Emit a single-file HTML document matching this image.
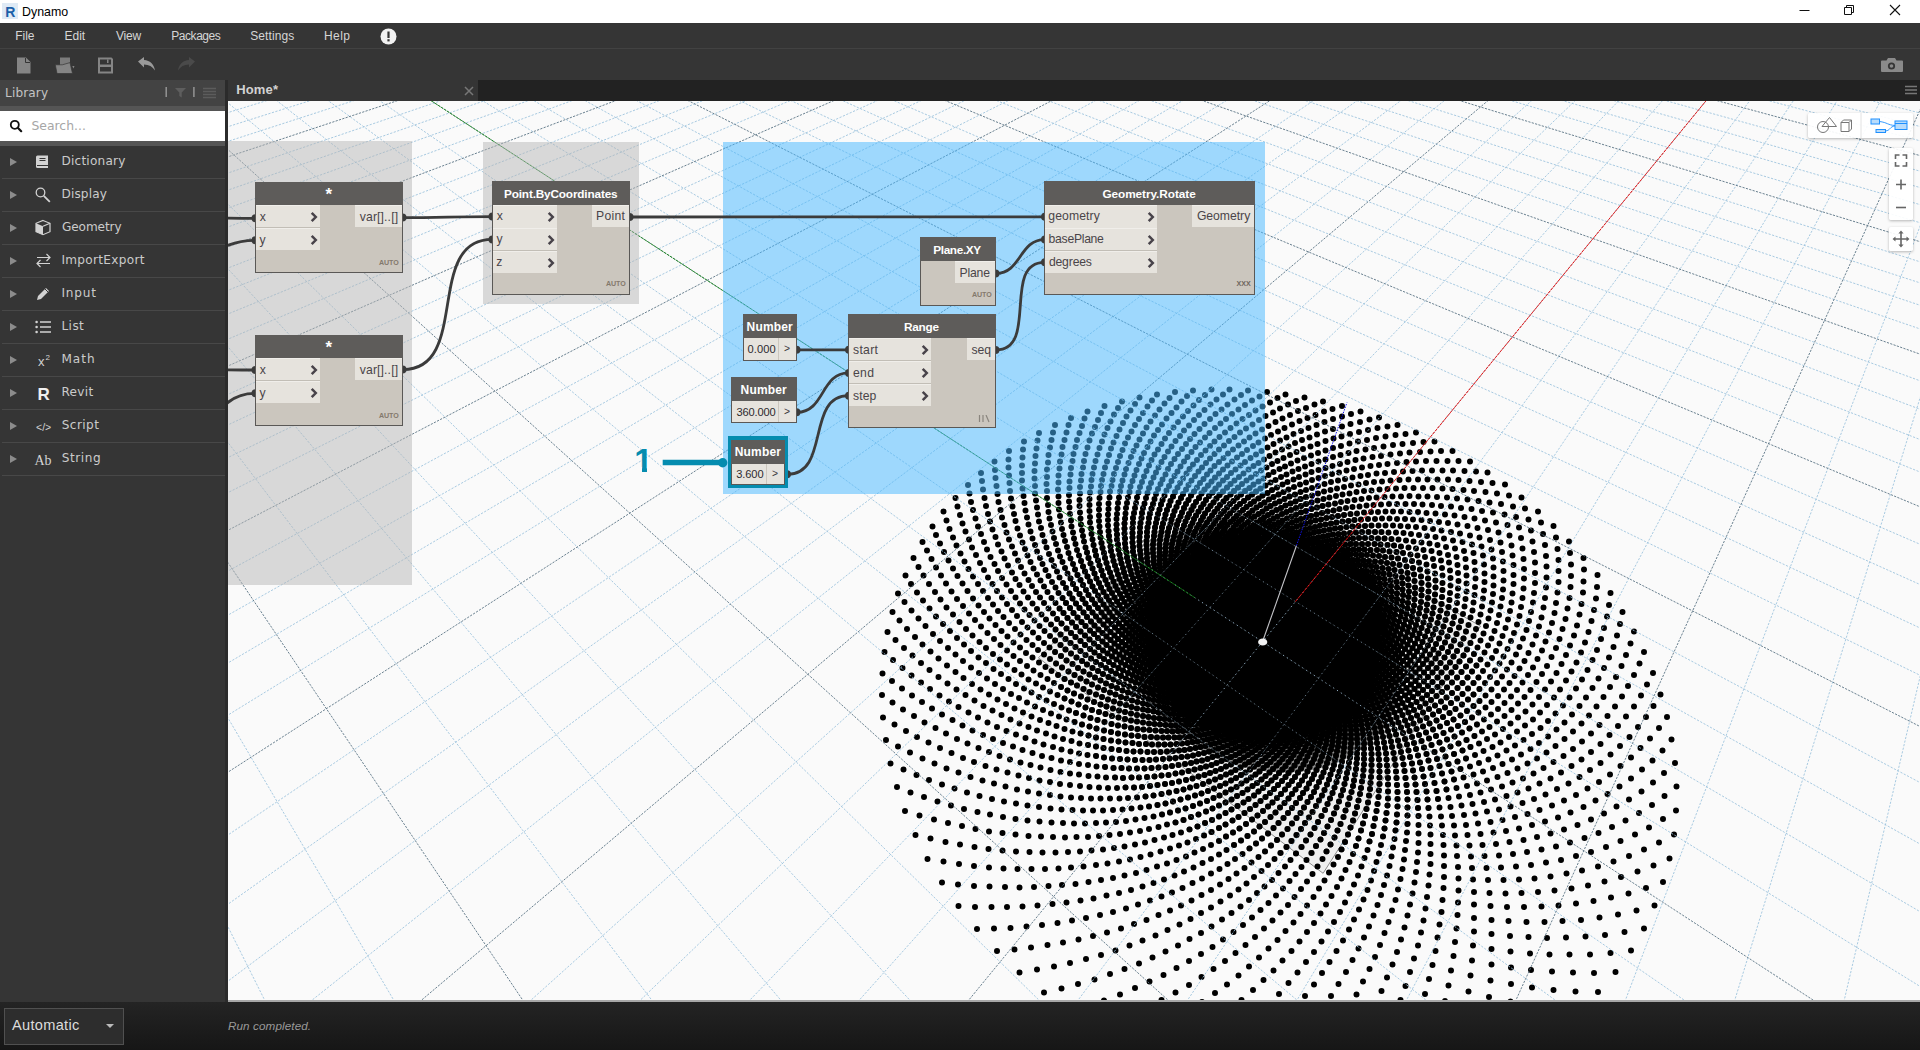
<!DOCTYPE html><html><head><meta charset="utf-8"><title>Dynamo</title><style>
*{box-sizing:border-box;margin:0;padding:0}
html,body{width:1920px;height:1050px;overflow:hidden;background:#353535;font-family:"Liberation Sans",sans-serif;}
.abs{position:absolute}
.tx{position:absolute;line-height:16px;white-space:nowrap}
#title{left:0;top:0;width:1920px;height:23px;background:#fff}
#menu{left:0;top:23px;width:1920px;height:25px;background:#353535}
#tool{left:0;top:48px;width:1920px;height:32px;background:#353535;border-top:1px solid #424242}
#lib{left:0;top:80px;width:225px;height:922px;background:#353535}
#libh{left:0;top:0;width:225px;height:26px;background:#434343}
#libs1{left:0;top:26px;width:225px;height:5px;background:#555}
#search{left:0;top:31px;width:225px;height:30px;background:#fff}
#libs2{left:0;top:61px;width:225px;height:5px;background:#555}
.li{position:absolute;left:2px;width:223px;height:33px;background:#353535;border-bottom:1px solid #484848}
.li .a{position:absolute;left:8px;top:12px;width:0;height:0;border-left:7px solid #8c8c8c;border-top:4px solid transparent;border-bottom:4px solid transparent}
.li svg{position:absolute;left:32px;top:7px}
#vbar{left:225px;top:80px;width:3px;height:922px;background:#2b2b2b}
#tabs{left:228px;top:80px;width:1692px;height:21px;background:#222}
#tab{left:0;top:0;width:250px;height:21px;background:#353535}
#canvas{left:228px;top:101px;width:1692px;height:899px;overflow:hidden;background:#fafafa}
#status{left:0;top:1002px;width:1920px;height:48px;background:linear-gradient(#242424,#161616)}
#sline{left:228px;top:1000px;width:1692px;height:2px;background:#a8a8a8}
#auto{left:4px;top:5.5px;width:120px;height:37px;background:#2d2d2d;border:1px solid #505050}
#auto .a{left:101px;top:15px;width:0;height:0;border-top:4px solid #bbb;border-left:4px solid transparent;border-right:4px solid transparent}
.grp{position:absolute}
.node{position:absolute;background:#cbc6be;border:1px solid #5a5856}
.node .h{position:absolute;left:-1px;top:-1px;right:-1px;background:#5e5c5a}
.port{position:absolute;background:#e6e3dd;height:22px;border-top:1px solid #f0eeea}
.port.i{left:0}
.port.o{right:0}
.port svg{position:absolute;right:2px;top:5px}
.sep{position:absolute;left:0;height:1px;background:#c2beb6}
.num{position:absolute;background:#e6e3dd}
.btn{position:absolute;background:rgba(255,255,255,.92);box-shadow:0 1px 3px rgba(0,0,0,.28);border-radius:2px}
</style></head><body><div id="title" class="abs"><svg class="abs" style="left:2px;top:3px" width="16" height="16" viewBox="0 0 16 16"><rect width="16" height="16" fill="#dfeaf5"/><text x="3.200" y="13.500" font-family="Liberation Sans,sans-serif" font-weight="bold" font-size="14" fill="#1b5fa8">R</text></svg><div class="tx" style="left:22.08px;top:3.8px;font-size:12.4px;color:#000;">Dynamo</div><svg class="abs" style="left:1790px;top:0" width="130" height="23" viewBox="0 0 130 23" fill="none" stroke="#111" stroke-width="1"><path d="M9.5 10.5h10"/><path d="M54.500 7.500h7v7h-7zM56.500 7.500v-2h7v7h-2"/><path d="M100 5l10 10M110 5l-10 10" stroke-width="1.100"/></svg></div><div id="menu" class="abs"><div class="tx" style="left:15.32px;top:4.64px;font-size:12px;color:#d6d6d6;letter-spacing:-0.04px;">File</div><div class="tx" style="left:64.52px;top:4.64px;font-size:12px;color:#d6d6d6;">Edit</div><div class="tx" style="left:116.05px;top:4.64px;font-size:12px;color:#d6d6d6;letter-spacing:-0.23px;">View</div><div class="tx" style="left:171.22px;top:4.64px;font-size:12px;color:#d6d6d6;letter-spacing:-0.44px;">Packages</div><div class="tx" style="left:250.21px;top:4.64px;font-size:12px;color:#d6d6d6;letter-spacing:0.09px;">Settings</div><div class="tx" style="left:324.02px;top:4.64px;font-size:12px;color:#d6d6d6;letter-spacing:0.44px;">Help</div><svg class="abs" style="left:380px;top:4.500px" width="17" height="17" viewBox="0 0 17 17"><circle cx="8.500" cy="8.500" r="8" fill="#f2f2f2"/><rect x="7.400" y="3.500" width="2.200" height="6.500" fill="#353535"/><rect x="7.400" y="11.200" width="2.200" height="2.200" fill="#353535"/></svg></div><div id="tool" class="abs"><svg class="abs" style="left:0;top:0" width="240" height="31" viewBox="0 48.500 240 31"><path d="M17 57h9l4.500 4.500v11.500h-13.500z" fill="#858585"/><path d="M25.500 57.500v4.500h4.500" fill="none" stroke="#353535" stroke-width="1"/><path d="M60 57h10v8h-10z" fill="#7c7c7c"/><path d="M55.300 64.300h7l7.700-2.200 2.500 10.900h-15.500z" fill="#858585" stroke="#353535" stroke-width=".7"/><path d="M72.300 65.500h2.200l-1.100 2.600z" fill="#858585"/><path d="M98 57h13.500l1.500 1.500v14.500h-15z" fill="#858585"/><rect x="100" y="59" width="11" height="5" fill="#353535"/><rect x="100" y="66.500" width="11" height="4.500" fill="#353535"/><rect x="107" y="59" width="1.500" height="3.500" fill="#858585"/><path d="M138 61l6-4.500v3c6 .5 10 4 11 10.500c-2.500-4-6-6-11-6v3z" fill="#9a9a9a"/><path d="M195 61l-6-4.500v3c-6 .5-10 4-11 10.500c2.500-4 6-6 11-6v3z" fill="#4a4a4a"/></svg><svg class="abs" style="left:1880px;top:8px" width="24" height="16" viewBox="0 0 24 16"><path d="M1 3.500h5.500l1.500-2.500h7l1.500 2.500h5.500a1 1 0 0 1 1 1v9.500a1 1 0 0 1-1 1h-20a1 1 0 0 1-1-1v-9.500a1 1 0 0 1 1-1z" fill="#8a8a8a"/><circle cx="11.500" cy="9" r="3.600" fill="#353535"/><circle cx="11.500" cy="9" r="1.800" fill="#8a8a8a"/></svg></div><div id="lib" class="abs"><div id="libh" class="abs"><div class="tx" style="left:5.11px;top:5.01px;font-size:12.1px;color:#c4c4c4;letter-spacing:0.12px;font-family:'DejaVu Sans','Liberation Sans',sans-serif;">Library</div><svg class="abs" style="left:160px;top:4px" width="60" height="18" viewBox="0 0 60 18"><rect x="5.500" y="3" width="1.400" height="10" fill="#9a9a9a"/><path d="M15 4h11l-4.300 4.500v5l-2.400-1.500v-3.500z" fill="#5e5e5e"/><rect x="33.200" y="3" width="1.400" height="10" fill="#9a9a9a"/><path d="M43 4.500h13M43 7.500h13M43 10.500h13M43 13.500h13" stroke="#5c5c5c" stroke-width="1.700"/></svg></div><div id="libs1" class="abs"></div><div id="search" class="abs"><svg class="abs" style="left:9px;top:8px" width="14" height="14" viewBox="0 0 14 14"><circle cx="5.800" cy="5.800" r="4" fill="none" stroke="#111" stroke-width="1.800"/><path d="M8.800 8.800l3.400 3.400" stroke="#111" stroke-width="2.200" stroke-linecap="round"/></svg><div class="tx" style="left:31.48px;top:6.5px;font-size:12.4px;color:#a6a6a6;font-family:'DejaVu Sans','Liberation Sans',sans-serif;">Search...</div></div><div id="libs2" class="abs"></div><div class="li" style="top:66px"><div class="a"></div><svg width="19" height="18" viewBox="0 0 19 18"><path d="M3.500 2.500h10.500v12.500h-10.500a1.500 1.500 0 0 1-1.500-1.500v-9.500a1.500 1.500 0 0 1 1.500-1.500z" fill="#d2d2d2"/><path d="M5.500 5.500h6M5.500 7.500h6" stroke="#353535" stroke-width="1"/><path d="M3 12.500h11" stroke="#353535" stroke-width="1"/></svg><div class="tx" style="left:59.41px;top:6.51px;font-size:12.1px;color:#cbcbcb;letter-spacing:0.22px;font-family:'DejaVu Sans','Liberation Sans',sans-serif;">Dictionary</div></div><div class="li" style="top:99px"><div class="a"></div><svg width="19" height="18" viewBox="0 0 19 18"><circle cx="6.500" cy="6.500" r="4.300" fill="none" stroke="#d2d2d2" stroke-width="1.300"/><path d="M9.800 9.800l6 6" stroke="#d2d2d2" stroke-width="1.800"/></svg><div class="tx" style="left:59.41px;top:6.51px;font-size:12.1px;color:#cbcbcb;letter-spacing:0.16px;font-family:'DejaVu Sans','Liberation Sans',sans-serif;">Display</div></div><div class="li" style="top:132px"><div class="a"></div><svg width="19" height="18" viewBox="0 0 19 18"><path d="M9 1.500l7 2.800v8.400l-7 3-7-3v-8.400z" fill="none" stroke="#d2d2d2" stroke-width="1.200"/><path d="M2 4.300l7 3v8.400l-7-3z" fill="#d2d2d2"/><path d="M9 7.300l7-3" stroke="#d2d2d2" stroke-width="1.200"/></svg><div class="tx" style="left:59.92px;top:6.51px;font-size:12.1px;color:#cbcbcb;letter-spacing:-0.08px;font-family:'DejaVu Sans','Liberation Sans',sans-serif;">Geometry</div></div><div class="li" style="top:165px"><div class="a"></div><svg width="19" height="18" viewBox="0 0 19 18"><path d="M3 6h13M12.500 2.500l3.500 3.500-3.500 3.500M16 12h-13M6.500 8.500l-3.500 3.500 3.500 3.500" fill="none" stroke="#d2d2d2" stroke-width="1.200" transform="translate(0,-0.500)"/></svg><div class="tx" style="left:59.41px;top:6.51px;font-size:12.1px;color:#cbcbcb;letter-spacing:0.3px;font-family:'DejaVu Sans','Liberation Sans',sans-serif;">ImportExport</div></div><div class="li" style="top:198px"><div class="a"></div><svg width="19" height="18" viewBox="0 0 19 18"><path d="M3 15l1-4 8-8 3 3-8 8z" fill="#d2d2d2"/><path d="M11 4l3 3" stroke="#353535" stroke-width="1"/></svg><div class="tx" style="left:59.41px;top:6.51px;font-size:12.1px;color:#cbcbcb;letter-spacing:0.79px;font-family:'DejaVu Sans','Liberation Sans',sans-serif;">Input</div></div><div class="li" style="top:231px"><div class="a"></div><svg width="19" height="18" viewBox="0 0 19 18"><path d="M6 4h11M6 9h11M6 14h11" stroke="#d2d2d2" stroke-width="1.600"/><circle cx="2.600" cy="4" r="1.300" fill="#d2d2d2"/><circle cx="2.600" cy="9" r="1.300" fill="#d2d2d2"/><circle cx="2.600" cy="14" r="1.300" fill="#d2d2d2"/></svg><div class="tx" style="left:59.41px;top:6.51px;font-size:12.1px;color:#cbcbcb;letter-spacing:0.44px;font-family:'DejaVu Sans','Liberation Sans',sans-serif;">List</div></div><div class="li" style="top:264px"><div class="a"></div><svg width="19" height="18" viewBox="0 0 19 18"><text x="4" y="15" font-family="Liberation Sans,sans-serif" font-size="13" fill="#d2d2d2">x</text><text x="11.500" y="8.500" font-family="Liberation Sans,sans-serif" font-size="8" fill="#d2d2d2">2</text></svg><div class="tx" style="left:59.41px;top:6.51px;font-size:12.1px;color:#cbcbcb;letter-spacing:0.98px;font-family:'DejaVu Sans','Liberation Sans',sans-serif;">Math</div></div><div class="li" style="top:297px"><div class="a"></div><svg width="19" height="18" viewBox="0 0 19 18"><text x="3.500" y="15.500" font-family="Liberation Sans,sans-serif" font-weight="bold" font-size="17" fill="#f0f0f0">R</text></svg><div class="tx" style="left:59.41px;top:6.51px;font-size:12.1px;color:#cbcbcb;letter-spacing:0.29px;font-family:'DejaVu Sans','Liberation Sans',sans-serif;">Revit</div></div><div class="li" style="top:330px"><div class="a"></div><svg width="19" height="18" viewBox="0 0 19 18"><text x="2" y="13.500" font-family="Liberation Sans,sans-serif" font-size="10.500" fill="#d2d2d2">&lt;/&gt;</text></svg><div class="tx" style="left:59.8px;top:6.51px;font-size:12.1px;color:#cbcbcb;letter-spacing:0.4px;font-family:'DejaVu Sans','Liberation Sans',sans-serif;">Script</div></div><div class="li" style="top:363px"><div class="a"></div><svg width="19" height="18" viewBox="0 0 19 18"><text x=".500" y="15" font-family="Liberation Serif,serif" font-size="14" fill="#d2d2d2">Ab</text></svg><div class="tx" style="left:59.8px;top:6.51px;font-size:12.1px;color:#cbcbcb;letter-spacing:0.56px;font-family:'DejaVu Sans','Liberation Sans',sans-serif;">String</div></div></div><div id="vbar" class="abs"></div><div id="tabs" class="abs"><div id="tab" class="abs"><div class="tx" style="left:8.13px;top:2.3px;font-size:13px;color:#d2d2d2;letter-spacing:0.18px;font-weight:bold;">Home*</div><svg class="abs" style="left:236px;top:6px" width="10" height="10" viewBox="0 0 10 10"><path d="M1 1l8 8M9 1l-8 8" stroke="#777" stroke-width="1.500"/></svg></div><svg class="abs" style="left:1677px;top:5px" width="12" height="12" viewBox="0 0 12 12"><path d="M0 1.500h12M0 5h12M0 8.500h12" stroke="#777" stroke-width="1.500"/></svg></div><div id="canvas" class="abs"><div class="abs" style="left:0;top:0"><svg id="bg" width="1692" height="899" viewBox="228 101 1692 899">
<rect x="228" y="101" width="1692" height="899" fill="#fafafa"/>
<path d="M1323.1 873.3L1480.5 626.1L1219.5 477.2L1038.4 657.8Z" fill="rgba(0,0,0,.045)" stroke="#8c8c8c" stroke-width="1"/>
<defs><clipPath id="ci"><path d="M1363.0 519.1L1348.1 511.5L1332.8 504.9L1317.2 499.3L1301.4 494.6L1285.4 491.0L1269.5 488.4L1253.5 486.8L1237.6 486.2L1221.9 486.7L1206.5 488.1L1191.3 490.6L1176.6 494.1L1162.3 498.6L1148.5 504.2L1135.3 510.7L1122.8 518.2L1111.0 526.6L1100.1 536.0L1090.1 546.4L1081.1 557.6L1073.2 569.6L1066.5 582.5L1061.0 596.1L1056.9 610.4L1054.3 625.3L1053.1 640.8L1053.5 656.7L1055.6 672.9L1059.3 689.4L1064.9 705.9L1072.1 722.4L1081.2 738.6L1092.0 754.5L1104.5 769.8L1118.6 784.4L1134.4 798.0L1151.5 810.6L1170.0 822.0L1189.6 831.9L1210.1 840.2L1231.3 846.9L1253.0 851.8L1274.9 854.8L1296.7 855.8L1318.3 855.0L1339.3 852.2L1359.4 847.6L1378.6 841.1L1396.5 833.0L1413.0 823.2L1427.9 812.1L1441.1 799.6L1452.5 786.1L1462.0 771.6L1469.7 756.4L1475.5 740.5L1479.3 724.3L1481.4 707.9L1481.6 691.4L1480.1 674.9L1477.0 658.6L1472.3 642.7L1466.2 627.2L1458.7 612.2L1450.0 597.8L1440.1 584.1L1429.3 571.1L1417.5 559.0L1404.8 547.7L1391.5 537.2L1377.5 527.7Z"/></clipPath><clipPath id="cj"><path d="M1339.3 548.1L1328.0 542.1L1316.3 536.9L1304.4 532.4L1292.3 528.7L1280.1 525.9L1267.9 523.8L1255.6 522.5L1243.4 522.0L1231.3 522.4L1219.4 523.6L1207.8 525.6L1196.5 528.4L1185.6 531.9L1175.1 536.3L1165.2 541.5L1155.8 547.4L1147.0 554.0L1139.0 561.3L1131.7 569.4L1125.2 578.0L1119.6 587.3L1115.0 597.1L1111.4 607.5L1108.8 618.3L1107.3 629.5L1107.0 641.0L1107.9 652.8L1110.0 664.7L1113.3 676.7L1117.9 688.7L1123.7 700.5L1130.8 712.1L1139.0 723.4L1148.5 734.1L1159.0 744.3L1170.6 753.8L1183.2 762.5L1196.5 770.3L1210.6 777.1L1225.3 782.8L1240.4 787.3L1255.8 790.6L1271.3 792.6L1286.8 793.3L1302.0 792.8L1316.9 790.9L1331.3 787.7L1345.0 783.4L1357.9 777.8L1369.8 771.2L1380.7 763.5L1390.5 754.9L1399.1 745.5L1406.4 735.4L1412.4 724.7L1417.1 713.5L1420.5 701.9L1422.6 690.1L1423.3 678.2L1422.8 666.2L1421.1 654.2L1418.2 642.4L1414.2 630.9L1409.1 619.6L1403.1 608.8L1396.1 598.4L1388.3 588.5L1379.7 579.1L1370.5 570.4L1360.6 562.3L1350.2 554.8Z"/></clipPath><path id="gm" d="M265.6 1002.0L226.0 922.9M394.8 1002.0L226.0 714.6M653.2 1002.0L226.0 439.9M782.4 1002.0L226.0 344.5M1843.8 1002.0L1922.0 668.5M911.6 1002.0L226.0 266.8M1734.2 1002.0L1922.0 391.6M1040.9 1002.0L226.0 202.3M1624.7 1002.0L1922.0 221.1M1299.3 1002.0L226.0 101.2M1405.5 1002.0L1881.5 99.0M1428.5 1002.0L274.7 99.0M1295.9 1002.0L1838.0 99.0M1557.7 1002.0L325.9 99.0M1186.3 1002.0L1794.5 99.0M1686.9 1002.0L377.2 99.0M1076.7 1002.0L1751.0 99.0M1922.0 987.6L479.8 99.0M857.6 1002.0L1664.0 99.0M1922.0 912.8L531.1 99.0M748.0 1002.0L1620.4 99.0M1922.0 845.1L582.4 99.0M638.4 1002.0L1576.9 99.0M1922.0 783.6L633.7 99.0M528.9 1002.0L1533.4 99.0M1922.0 676.2L736.3 99.0M309.7 1002.0L1446.4 99.0M1922.0 628.9L787.6 99.0M226.0 982.6L1402.9 99.0M1922.0 585.4L838.9 99.0M226.0 905.6L1359.4 99.0M1922.0 545.1L890.2 99.0M226.0 836.3L1315.9 99.0M1922.0 472.8L992.8 99.0M226.0 716.3L1228.9 99.0M1922.0 440.3L1044.1 99.0M226.0 664.1L1185.4 99.0M1922.0 410.0L1095.4 99.0M226.0 616.2L1141.9 99.0M1922.0 381.5L1146.7 99.0M226.0 572.1L1098.4 99.0M1922.0 329.6L1249.3 99.0M226.0 493.6L1011.4 99.0M1922.0 305.9L1300.6 99.0M226.0 458.5L967.9 99.0M1922.0 283.5L1351.9 99.0M226.0 425.8L924.4 99.0M1922.0 262.4L1403.2 99.0M226.0 395.3L880.9 99.0M1922.0 223.3L1505.8 99.0M226.0 340.0L793.9 99.0M1922.0 205.2L1557.1 99.0M226.0 314.8L750.4 99.0M1922.0 188.1L1608.4 99.0M226.0 291.1L706.9 99.0M1922.0 171.7L1659.7 99.0M226.0 268.8L663.4 99.0M1922.0 141.3L1762.3 99.0M226.0 227.7L576.4 99.0M1922.0 127.0L1813.6 99.0M226.0 208.8L532.9 99.0M1922.0 113.5L1864.9 99.0M226.0 190.8L489.4 99.0M1922.0 100.4L1916.2 99.0M226.0 173.7L445.9 99.0M226.0 142.0L358.9 99.0M226.0 127.3L315.4 99.0M226.0 113.2L271.9 99.0M226.0 99.7L228.4 99.0"/><path id="gM" d="M524.0 1002.0L226.0 559.7M1170.1 1002.0L226.0 147.8M1515.1 1002.0L1922.0 105.6M1816.1 1002.0L428.5 99.0M967.2 1002.0L1707.5 99.0M1922.0 727.5L685.0 99.0M419.3 1002.0L1489.9 99.0M1922.0 507.6L941.5 99.0M226.0 773.4L1272.4 99.0M1922.0 354.8L1198.0 99.0M226.0 531.3L1054.9 99.0M1922.0 242.3L1454.5 99.0M226.0 366.8L837.4 99.0M1922.0 156.1L1711.0 99.0M226.0 247.7L619.9 99.0M226.0 157.5L402.4 99.0"/></defs>
<path id="dt" d="M1416 432.5h0m-18.5-7.5h0m-18.5-7.5h0m-18.5-6h0m-18.5-5.5h0m-19-4.5h0m-18.5-4h0m-19-3h0m-18.5-2.5h0m-19-1.5h0m-18.5-1h0m-18 0h0m-18.5 1h0m-18 1.5h0m-18 2.5h0m-17.5 3h0m-17.5 4h0m-17.5 4.5h0m-17 5.5h0m-16.5 6.5h0m-16 7h0m-16 8h0m-15 8.5h0m-15 9.5h0m-14.5 10.5h0m-13.5 11.5h0m-13 12h0m-12.5 13h0m-12 13.5h0m-11 15h0m-10 15.5h0m-9 16h0m-8 17.5h0m-7.5 18h0m-5.5 18.5h0m-5 20h0m-3 20h0m-2 21.5h0m-.5 21.5h0m1 22.5h0m3 22.5h0m4.5 23.5h0m6.5 23.5h0m8 24h0m10.5 24h0m12 24h0m14.5 23.5h0m16.5 23.5h0m18.5 23h0m20 22h0m22.5 21.5h0m24.5 20h0m554-.5h0m17.5-20h0m15.5-21.5h0m13-22h0m10.5-23h0m8.5-23.5h0m6.5-23.5h0m4.5-24h0m2-24h0m.5-24h0m-1.5-23.5h0m-3.5-23.5h0m-4.5-22.5h0m-6.5-22.5h0m-7.5-21.5h0m-9-21h0m-10-20.5h0m-11.5-19.5h0m-12-19h0m-13-18h0m-14-17h0m-14.5-16.5h0m-15.5-15.5h0m-15.5-14.5h0m-16.5-14h0m-16.5-13h0m-17.5-12h0m-17.5-11h0m-17.5-10.5h0m-18-9.5h0m6.5 9.5h0m-17.5-9h0m-18-8h0m-18-7.5h0m-18-7h0m-18.5-5.5h0m-18.5-5h0m-18-4.5h0m-18.5-3.5h0m-18.5-3h0m-18-1.5h0m-18.5-1.5h0m-18-.5h0m-18 .5h0m-18 1h0m-17.5 2h0m-17.5 2.5h0m-17 3.5h0m-17 4h0m-17 5h0m-16.5 5.5h0m-16 6.5h0m-15.5 7.5h0m-15.5 8h0m-14.5 9h0m-14.5 10h0m-13.5 10.5h0m-13 11h0m-12.5 12.5h0m-12 13h0m-11 14h0m-10.5 14.5h0m-9 15.5h0m-8.5 16.5h0m-7.5 17h0m-6.5 18h0m-5 18.5h0m-4 19.5h0m-2.5 20h0m-1 21h0m.5 21.5h0m2 22h0m3.5 22h0m5.5 23h0m7 23h0m9 23h0m11 23h0m13 23h0m14.5 23h0m17 22.5h0m19 21.5h0m20.5 21h0m22.5 20h0m24.5 19h0m514 3h0m18.5-18.5h0m16.5-20h0m14-21h0m12-21.5h0m9.5-22.5h0m7.5-22.5h0m5.5-23h0m4-23.5h0m1.5-23h0m-.5-23h0m-1.5-22.5h0m-3.5-22.5h0m-5.5-22h0m-6.5-21.5h0m-7.5-21h0m-9-20h0m-10.5-19.5h0m-11-19h0m-12-18h0m-13-17.5h0m-14-16.5h0m-14-15.5h0m-15-15h0m-16-14h0m-16-13h0m-16.5-12.5h0m-16.5-11.5h0m-17.5-10.5h0m6 10h0m-17-10h0m-17-9.5h0m-17.5-8.5h0m-17.5-8h0m-18-7h0m-17.5-6h0m-18-5.5h0m-18-5h0m-18-3.5h0m-18-3.5h0m-18-2h0m-18-2h0m-17.5-1h0m-18 0h0m-17.5 .5h0m-17.5 1.5h0m-17 2h0m-17 3h0m-17 4h0m-16.5 4h0m-16 5.5h0m-16 6h0m-15.5 6.5h0m-15 7.5h0m-15 8.5h0m-14 9h0m-14 10h0m-13 10.5h0m-12.5 11.5h0m-12 12.5h0m-11 13h0m-10.5 14h0m-9.5 14.5h0m-8.5 15.5h0m-8 16.5h0m-6.5 17h0m-5.5 18h0m-4.5 18.5h0m-3 19h0m-1.5 20h0m-.5 20.5h0m1 21h0m3 21.5h0m4 21.5h0m6.5 22.5h0m7.5 22h0m10 22.5h0m11.5 22.5h0m13.5 22h0m15 22h0m17.5 21h0m19 21h0m20.5 19.5h0m23 19h0m24 17.5h0m26 16.5h0m449.5-10.5h0m19.5-17.5h0m17-18h0m15-19.5h0m13-20.5h0m10.5-21h0m9-22h0m6.5-22h0m5-22h0m3-22.5h0m1-22.5h0m-.5-22h0m-2.5-22h0m-4-21.5h0m-5-21.5h0m-7-20.5h0m-8-20h0m-9-19.5h0m-10-19h0m-11-18h0m-12.5-17h0m-12.5-17h0m-13.5-15.5h0m-14.5-15h0m-14.5-14.5h0m-15.5-13h0m-16-13h0m-16-11.5h0m4.5 10h0m-16-11h0m-16.5-10.5h0m-16.5-9.5h0m-16.5-9h0m-17.5-8h0m-17-7.5h0m-17.5-6.5h0m-17.5-6h0m-17.5-5h0m-17.5-4h0m-17.5-4h0m-18-2.5h0m-17.5-2h0m-17.5-1.5h0m-17.5-.5h0m-17 0h0m-17 1h0m-17 2h0m-17 2h0m-16.5 3.5h0m-16.5 3.5h0m-16 5h0m-15.5 5.5h0m-15.5 6h0m-15 7h0m-14.5 7.5h0m-14.5 8.5h0m-13.5 9.5h0m-13 10h0m-12.5 10.5h0m-12 12h0m-11.5 12h0m-10.5 13.5h0m-9.5 14h0m-9 14.5h0m-8 15.5h0m-7 16.5h0m-6 16.5h0m-4.5 18h0m-3.5 18.5h0m-2.5 18.5h0m-1 20h0m.5 20h0m2 20.5h0m3 21h0m5.5 21.5h0m6.5 21.5h0m8.5 21.5h0m10.5 21.5h0m12 21.5h0m14 21.5h0m15.5 20.5h0m17.5 20.5h0m19.5 19.5h0m21 18.5h0m22.5 18h0m24.5 16.5h0m25.5 15h0m390.5 7h0m21.5-14h0m20-16h0m17.5-17h0m16-18h0m14-19h0m11.5-20h0m10-20.5h0m8-21h0m6-21.5h0m4-21.5h0m2.5-21.5h0m.5-22h0m-1.5-21.5h0m-2.5-21h0m-4-20.5h0m-6-20.5h0m-6.5-20h0m-8-19h0m-9.5-19h0m-10-18h0m-11-17.5h0m-12-16.5h0m-12.5-16h0m-13.5-15h0m-14-14.5h0m-15-13.5h0m-15-13h0m3.5 10.5h0m-15-12h0m-15.5-11.5h0m-15.5-11h0m-16-9.5h0m-16.5-9.5h0m-16.5-8.5h0m-16.5-7.5h0m-17-7h0m-17-6h0m-17-5.5h0m-17.5-4.5h0m-17-4h0m-17.5-3h0m-17-2.5h0m-17.5-2h0m-17-1h0m-17 0h0m-17 .5h0m-16.5 1h0m-16.5 2h0m-16.5 2.5h0m-16 3.5h0m-16 4h0m-15.5 5h0m-15.5 5.5h0m-15 6.5h0m-14.5 7h0m-14 8h0m-13.5 8.5h0m-13 9.5h0m-12.5 10h0m-12 11h0m-11.5 12h0m-10.5 12.5h0m-10 13h0m-9 14h0m-8 15h0m-7.5 15h0m-6 16.5h0m-5.5 16.5h0m-4 17.5h0m-3 18.5h0m-1.5 18.5h0m0 19.5h0m1 19.5h0m2.5 20.5h0m4 20h0m6 21h0m7.5 21h0m9 21h0m11 20.5h0m12.5 21h0m14.5 20.5h0m16 19.5h0m17.5 19.5h0m19.5 18.5h0m21 17.5h0m23 16.5h0m24 15h0m25 14h0m26.5 12h0m327.5-3h0m22-13h0m20-14h0m18.5-15.5h0m16.5-17h0m15-17.5h0m12.5-19h0m11-19.5h0m9-20h0m7-20.5h0m5-20.5h0m3.5-21h0m2-21h0m0-21h0m-1.5-20.5h0m-3.5-20.5h0m-4-20h0m-6-19.5h0m-7-19.5h0m-8-18.5h0m-9.5-18h0m-10-17h0m-11-17h0m-12-16h0m-12.5-15h0m-13.5-14.5h0m-13.5-14h0m2 10.5h0m-13.5-13h0m-14.5-12.5h0m-14.5-11.5h0m-15-11h0m-15.5-10.5h0m-16-9h0m-16-9h0m-16-8h0m-16.5-7h0m-16.5-6.5h0m-17-6h0m-17-5h0m-16.5-4h0m-17-4h0m-17-2.5h0m-17-2.5h0m-16.5-1h0m-17-1h0m-16.5 0h0m-16.5 1h0m-16 1.5h0m-16.5 2h0m-16 3h0m-15.5 3.5h0m-15.5 4.5h0m-15 5h0m-15 6h0m-14 6.5h0m-14 7.5h0m-13.5 8h0m-13.5 8.5h0m-12.5 9.5h0m-12 10.5h0m-11.5 11h0m-10.5 12h0m-10 12.5h0m-9 13h0m-8.5 14h0m-7.5 15h0m-7 15h0m-5.5 16h0m-4.5 17h0m-3 17.5h0m-2.5 17.5h0m-1 18.5h0m.5 19h0m2 19.5h0m3.5 19.5h0m4.5 20h0m6.5 20.5h0m8 20h0m9.5 20.5h0m11.5 20h0m13 20h0m15 19.5h0m16 19h0m18 18h0m20 17.5h0m21 16.5h0m22.5 15.5h0m23.5 14h0m25 12.5h0m26 11h0m26.5 9.5h0m243-1h0m23.5-9.5h0m22-11h0m20.5-13h0m19-14h0m17-15.5h0m15.5-17h0m13.5-17.5h0m12-18h0m10-19h0m8-19.5h0m6-20h0m4.5-20.5h0m3-20h0m1-20.5h0m-.5-20h0m-2-20h0m-3-19.5h0m-5-19.5h0m-6-19h0m-7-18h0m-8.5-18h0m-9-17.5h0m-10-16.5h0m-11-16h0m-12-15.5h0m-12.5-14.5h0m1 10.5h0m-12.5-14h0m-13-13h0m-13.5-13h0m-14-11.5h0m-14.5-11.5h0m-15-10.5h0m-15-9.5h0m-15.5-9h0m-15.5-8.5h0m-16-7.5h0m-16.5-6.5h0m-16-6.5h0m-16.5-5h0m-16.5-5h0m-16.5-3.5h0m-16.5-3.5h0m-16.5-2.5h0m-16.5-2h0m-16.5-1h0m-16.5 0h0m-16 0h0m-16 1h0m-16 2h0m-16 2.5h0m-15.5 3h0m-15 4h0m-15 4.5h0m-14.5 5.5h0m-14.5 6h0m-14 6.5h0m-13.5 7.5h0m-13 8h0m-12.5 9h0m-12 10h0m-11.5 10h0m-10.5 11.5h0m-10.5 11.5h0m-9 12.5h0m-9 13.5h0m-7.5 14h0m-7 14.5h0m-6 15.5h0m-5 16h0m-3.5 16.5h0m-3 17h0m-1.5 17.5h0m0 18.5h0m1 18.5h0m2.5 19h0m4 19h0m5.5 19.5h0m7 19.5h0m8.5 20h0m10.5 19.5h0m11.5 19.5h0m13.5 19h0m15 18.5h0m16.5 18h0m18.5 17h0m19.5 16.5h0m21 15.5h0m22.5 14.5h0m23.5 13h0m24.5 11.5h0m25.5 10h0m26 8h0m26.5 7h0m159 0h0m24.5-6h0m23.5-8.5h0m22-10h0m21-11h0m19-13h0m18-14.5h0m16-15h0m14-16.5h0m13-17h0m10.5-18h0m9-18.5h0m7.5-19h0m5.5-19.5h0m3.5-19.5h0m2.5-19.5h0m.5-20h0m-1-19.5h0m-2-19h0m-4-19h0m-5-18.5h0m-6-18.5h0m-7.5-17.5h0m-8-17h0m-9.5-17h0m-10-16h0m-11-15h0m-.5 10h0m-11-14.5h0m-11.5-14h0m-12-13.5h0m-13-13h0m-13.5-12h0m-13.5-11.5h0m-14.5-10.5h0m-14.5-10h0m-15-9h0m-15-8.5h0m-15.5-8h0m-16-7h0m-15.5-6.5h0m-16-6h0m-16-5h0m-16.5-4h0m-16-3.5h0m-16.5-3h0m-16-2h0m-16-1.5h0m-16-1h0m-16 0h0m-16 .5h0m-15.5 1.5h0m-15.5 2h0m-15.5 2.5h0m-15 3.5h0m-15 4h0m-14.5 5h0m-14 5.5h0m-14 6h0m-13 7h0m-13 7.5h0m-12.5 8.5h0m-12 9h0m-11.5 10h0m-11 10.5h0m-10.5 11h0m-9.5 12h0m-8.5 12.5h0m-8 13h0m-7.5 14h0m-6 14.5h0m-5.5 15.5h0m-4 15.5h0m-3 16.5h0m-2 17h0m-1 17.5h0m.5 18h0m1.5 18h0m3.5 18.5h0m4.5 19h0m6 19h0m7.5 19h0m9 19h0m10.5 18.5h0m12.5 18.5h0m13.5 18.5h0m15.5 17.5h0m17 17h0m18 16.5h0m19.5 15.5h0m21 14.5h0m22.5 13h0m23 12h0m24 10.5h0m25 9h0m25.5 7.5h0m26 5.5h0m26 4h0m26 2h0m26 0h0m25.5-1.5h0m25-3.5h0m24-5h0m23.5-7h0m22-8.5h0m21-10h0m19.5-11.5h0m18.5-13h0m16.5-14h0m15-15.5h0m13-16h0m12-17h0m9.5-17.5h0m8.5-18h0m6.5-18.5h0m4.5-19h0m3.5-18.5h0m1.5-19h0m0-19h0m-1-19h0m-3-18.5h0m-4-18.5h0m-5-18h0m-6.5-17.5h0m-7-17h0m-8.5-16.5h0m-9.5-16h0m-1.5 10h0m-9.5-15h0m-10-15h0m-11-14h0m-11.5-13.5h0m-12-13h0m-12.5-12.5h0m-13.5-11.5h0m-13.5-10.5h0m-14-10.5h0m-14.5-9.5h0m-14.5-8.5h0m-15-8h0m-15.5-7.5h0m-15-7h0m-16-6h0m-15.5-5h0m-15.5-5h0m-16-3.5h0m-16-3.5h0m-15.5-2.5h0m-16-2h0m-16-1h0m-15.5-.5h0m-15.5 0h0m-15.5 1h0m-15.5 1.5h0m-15 2.5h0m-15 2.5h0m-14.5 4h0m-14.5 4h0m-14 5h0m-13.5 6h0m-13.5 6.5h0m-13 7h0m-12.5 7.5h0m-12 8.5h0m-11.5 9.5h0m-10.5 9.5h0m-10.5 11h0m-9.5 11h0m-9 12h0m-8.5 12.5h0m-7 13.5h0m-7 13.5h0m-5.5 14.5h0m-4.5 15h0m-3.5 16h0m-2.5 16h0m-1.5 16.5h0m0 17.5h0m1 17.5h0m2 17.5h0m4 18.5h0m5 18h0m6.5 18.5h0m8.5 18.5h0m9.5 18.5h0m11 18h0m12.5 17.5h0m14 17.5h0m15.5 17h0m17 16h0m18.5 15.5h0m19.5 14.5h0m21 13.5h0m21.5 12h0m23 11h0m23.5 9.5h0m24.5 8h0m25 6.5h0m25 4.5h0m25 3h0m25.5 1.5h0m24.5-.5h0m24.5-2.5h0m24-4h0m23-5.5h0m22.5-7h0m21-9h0m19.5-10.5h0m18.5-11.5h0m17-13h0m15.5-14h0m14-15h0m12.5-15.5h0m10.5-16.5h0m9-17.5h0m7.5-17.5h0m6-18h0m4-18.5h0m2.5-18.5h0m1-18h0m0-18.5h0m-2-18h0m-3-18h0m-4-18h0m-5.5-17h0m-6.5-17h0m-7.5-16.5h0m-3 10h0m-7.5-16h0m-8.5-15.5h0m-9.5-14.5h0m-10-14.5h0m-10.5-13.5h0m-11.5-13h0m-12-12h0m-12.5-12h0m-13-11h0m-13.5-10.5h0m-14-9.5h0m-14-9h0m-14.5-8.5h0m-14.5-7.5h0m-15-7h0m-15.5-6.5h0m-15-5.5h0m-15.5-5h0m-15.5-4h0m-15.5-4h0m-15.5-2.5h0m-15.5-2.5h0m-15.5-1.5h0m-15.5-1h0m-15 0h0m-15.5 .5h0m-15 1h0m-14.5 2h0m-15 2.5h0m-14.5 3h0m-14 4h0m-14 4.5h0m-13.5 5h0m-13.5 6h0m-12.5 6.5h0m-12.5 7h0m-12 8h0m-11.5 8.5h0m-11 9.5h0m-10.5 10h0m-10 10.5h0m-9 11.5h0m-8.5 12h0m-7.5 12.5h0m-6.5 13h0m-6 14h0m-5 14.5h0m-4 15h0m-3 15.5h0m-2 15.5h0m-1 16.5h0m.5 17h0m2 17h0m3 17.5h0m4 18h0m6 17.5h0m7 18h0m8.5 17.5h0m10 18h0m11.5 17.5h0m13 17h0m14 16.5h0m16 16h0m17 15.5h0m18 14.5h0m19.5 13.5h0m21 12h0m21.5 11.5h0m22.5 10h0m23 8.5h0m24 7h0m24 5.5h0m24.5 4h0m24 2h0m24.5 .5h0m24-1h0m23.5-3h0m23-4.5h0m21.5-6h0m21.5-7.5h0m19.5-9h0m19-10.5h0m17.5-11.5h0m15.5-13h0m14.5-14h0m13-14.5h0m11.5-16h0m10-16h0m8-17h0m6.5-17h0m5.5-17.5h0m3.5-18h0m2-17.5h0m.5-18h0m-.5-18h0m-2-17.5h0m-3.5-17.5h0m-4.5-17h0m-5.5-16.5h0m-4.5 9h0m-5.5-16h0m-7-15.5h0m-7.5-15h0m-8.5-15h0m-9.5-14h0m-10-13.5h0m-10.5-13.5h0m-11.5-12h0m-12-12h0m-12-11.5h0m-13-10.5h0m-13.5-9.5h0m-13.5-9.5h0m-14-8.5h0m-14-8h0m-14.5-7h0m-14.5-7h0m-15-6h0m-15-5h0m-15-4.5h0m-15-4h0m-15.5-3.5h0m-15-2.5h0m-15-2h0m-15.5-1h0m-15-.5h0m-15 0h0m-14.5 .5h0m-15 1.5h0m-14.5 2h0m-14 3h0m-14 3h0m-14 4h0m-13.5 5h0m-13 5.5h0m-13 6h0m-12.5 6.5h0m-12 7.5h0m-11.5 8h0m-11 8.5h0m-10 9.5h0m-10 10h0m-9.5 11h0m-8.5 11h0m-7.5 12h0m-7 12.5h0m-6.5 13.5h0m-5 13.5h0m-4.5 14.5h0m-3.5 14.5h0m-2.5 15.5h0m-1.5 15.5h0m0 16.5h0m1 16.5h0m2.5 16.5h0m3.5 17h0m5 17.5h0m6 17h0m7.5 17.5h0m9 17h0m10.5 17h0m11.5 17h0m13.5 16h0m14.5 16h0m15.5 15h0m17.5 14.5h0m18 13.5h0m19.5 13h0m20.5 11.5h0m21 10h0m22 9h0m23 8h0m23 6h0m23.5 4.5h0m23.5 3h0m23.5 1.5h0m23.5 0h0m23-2h0m22.5-3h0m22-5h0m21-6.5h0m19.5-8h0m19-9h0m17.5-10.5h0m16.5-12h0m15-12.5h0m13.5-14h0m12-14.5h0m10.5-15.5h0m9-16h0m7.5-16h0m6-17h0m4.5-17h0m3-17.5h0m1.5-17h0m0-17.5h0m-1-17h0m-2.5-17h0m-3.5-17h0m-6 9h0m-3.5-16.5h0m-5-16h0m-6-15.5h0m-6.5-15h0m-8-14.5h0m-8.5-14h0m-9-14h0m-10-13h0m-10.5-12.5h0m-11.5-12h0m-11.5-11h0m-12.5-11h0m-12.5-10h0m-13-9.5h0m-13.5-8.5h0m-14-8.5h0m-14-7.5h0m-14-7h0m-14.5-6h0m-14.5-5.5h0m-14.5-5h0m-15-4h0m-15-4h0m-14.5-2.5h0m-15-2.5h0m-15-1.5h0m-14.5-1h0m-15-.5h0m-14.5 .5h0m-14.5 1h0m-14 1.5h0m-14.5 2.5h0m-13.5 3h0m-14 3.5h0m-13 4h0m-13 5h0m-13 5.5h0m-12.5 6.5h0m-11.5 6.5h0m-11.5 7.5h0m-11 8.5h0m-10.5 8.5h0m-10 9.5h0m-9.5 10h0m-8.5 11h0m-8 11h0m-7.5 12h0m-6.5 12.5h0m-5.5 13h0m-4.5 14h0m-4 14h0m-3 14.5h0m-1.5 15.5h0m-1 15.5h0m.5 15.5h0m1.5 16.5h0m3 16.5h0m4 16.5h0m5.5 16.5h0m6.5 17h0m8 16.5h0m9.5 17h0m10.5 16h0m12 16h0m13.5 15.5h0m15 15h0m15.5 14.5h0m17.5 13.5h0m18 13h0m19 11.5h0m20.5 10.5h0m21 9.5h0m21.5 8.5h0m22 6.5h0m22.5 5.5h0m23 3.5h0m23 2.5h0m22.5 1h0m22.5-1h0m22-2.5h0m21.5-3.5h0m21-5.5h0m20-7h0m18.5-8h0m18-9.5h0m16.5-10.5h0m15.5-11.5h0m14-13h0m12.5-13.5h0m11-14.5h0m10-15h0m8-15.5h0m7-16h0m5-16.5h0m4-16.5h0m2.5-16.5h0m1-17h0m0-16.5h0m-1.5-17h0m-7.5 8h0m-1.5-16h0m-3-16h0m-4-15.5h0m-5-15.5h0m-6-15h0m-7-14.5h0m-8-14h0m-8.5-13.5h0m-9-13h0m-10-13h0m-10.5-12h0m-11-11h0m-12-11h0m-12-10.5h0m-12.5-9.5h0m-13-9h0m-13-8.5h0m-13.5-7.5h0m-14-7h0m-14-6.5h0m-14-6h0m-14-5h0m-14.5-4.5h0m-14.5-4h0m-14.5-3.5h0m-14.5-2.5h0m-14.5-2h0m-14.5-1.5h0m-14.5-.5h0m-14.5 0h0m-14 .5h0m-14.5 1h0m-13.5 2h0m-14 2.5h0m-13.5 3h0m-13 4h0m-13 4.5h0m-12.5 5h0m-12.5 6h0m-12 6h0m-11.5 7h0m-11 8h0m-10.5 8h0m-10 9h0m-9.5 9.5h0m-8.5 10h0m-8 11h0m-7.5 11h0m-7 12h0m-6 12.5h0m-5 13h0m-4 13.5h0m-3.5 14h0m-2 14.5h0m-1.5 15h0m0 15h0m1 15.5h0m2 16h0m3.5 16h0m4.5 16.5h0m6 16h0m7 16.5h0m8.5 16h0m9.5 16h0m11 15.5h0m12.5 15.5h0m13.5 15h0m15 14h0m16 13.5h0m17 13h0m18 12h0m19 10.5h0m20 10h0m20.5 8.5h0m21 7.5h0m22 5.5h0m21.5 5h0m22.5 3h0m22 1.5h0m22 0h0m21.5-1h0m21-3h0m20.5-4.5h0m20-5.5h0m19-7h0m18-8.5h0m16.5-9.5h0m16-10.5h0m14-12h0m13-12.5h0m12-13.5h0m10.5-14h0m8.5-15h0m7.5-15h0m6-15.5h0m5-16h0m3-16.5h0m2-16h0m1-16.5h0m-8.5 7h0m0-15.5h0m-1-16h0m-2-15.5h0m-3-15.5h0m-4.5-15h0m-5-14.5h0m-6-14.5h0m-7-14h0m-8-13.5h0m-8.5-13h0m-9.5-13h0m-9.5-12h0m-10.5-11.5h0m-11-11h0m-11.5-10h0m-12-10h0m-12.5-9h0m-12.5-9h0m-13-7.5h0m-13.5-7.5h0m-13.5-7h0m-13.5-6h0m-14-5.5h0m-14-4.5h0m-14-4.5h0m-14.5-3.5h0m-14-3h0m-14.5-2.5h0m-14-1.5h0m-14.5-1h0m-14-.5h0m-14 0h0m-13.5 1h0m-14 1.5h0m-13.5 2h0m-13.5 3h0m-13 3h0m-12.5 4h0m-13 5h0m-12 5h0m-12 6h0m-11 6.5h0m-11 7h0m-11 8h0m-10 8h0m-9.5 9h0m-8.5 9.5h0m-8.5 10.5h0m-7.5 10.5h0m-7 11.5h0m-6 12h0m-5.5 12h0m-4.5 13h0m-4 13.5h0m-2.5 14h0m-1.5 14h0m-1 15h0m.5 15h0m1.5 15h0m2.5 15.5h0m4 15.5h0m5 16h0m6.5 15.5h0m7.5 16h0m8.5 15.5h0m10 15.5h0m11.5 15h0m12.5 14.5h0m13.5 14h0m15 13.5h0m16 13h0m17 12h0m18 11h0m19 10h0m19.5 9h0m20 7.5h0m21 6.5h0m21 5.5h0m21 3.5h0m21.5 2.5h0m21.5 1h0m21-.5h0m21-2h0m20-3h0m19.5-4.5h0m19-6.5h0m18-7h0m17-8.5h0m16-9.5h0m14.5-11h0m13.5-11.5h0m12.5-12.5h0m10.5-13.5h0m9.5-13.5h0m8.5-14.5h0m6.5-15h0m5.5-15.5h0m4-15.5h0m3-15.5h0m-9.5 6h0m2-15.5h0m1.5-15h0m-.5-15.5h0m-1-15.5h0m-2.5-15h0m-3.5-14.5h0m-4.5-14.5h0m-5.5-14.5h0m-6-14h0m-7-13.5h0m-8-13h0m-8.5-12.5h0m-9-12h0m-10-11.5h0m-10.5-11h0m-11-10.5h0m-11.5-10h0m-11.5-9.5h0m-12-9h0m-12.5-8h0m-13-7.5h0m-13-7h0m-13.5-6.5h0m-13.5-5.5h0m-13.5-5h0m-13.5-4.5h0m-14-4h0m-14-3.5h0m-14-2.5h0m-14-2h0m-13.5-1.5h0m-14-.5h0m-14-.5h0m-13.5 .5h0m-13.5 1h0m-13.5 2h0m-13 2h0m-13 3h0m-12.5 3.5h0m-12.5 4.5h0m-12 4.5h0m-12 5.5h0m-11.5 6h0m-11 6.5h0m-10.5 7.5h0m-10 7.5h0m-9.5 8.5h0m-9 9h0m-8.5 10h0m-7.5 10h0m-7.5 10.5h0m-6.5 11.5h0m-5.5 12h0m-4.5 12h0m-4 13h0m-3.5 13h0m-2 14h0m-1 14h0m-.5 14.5h0m1 14.5h0m2 15h0m3 15h0m4.5 15.5h0m5.5 15h0m6.5 15.5h0m8 15h0m9 15.5h0m10.5 14.5h0m11.5 14.5h0m12.5 14h0m14 13.5h0m15 12.5h0m16 12h0m17 11.5h0m17.5 10h0m18.5 9.5h0m19.5 8h0m19.5 7h0m20.5 5.5h0m20.5 4.5h0m20.5 3h0m21 2h0m20.5 .5h0m20-1h0m20-2.5h0m19.5-4h0m18.5-5h0m18-6h0m17-7.5h0m16.5-9h0m15-9.5h0m13.5-10.5h0m12.5-12h0m11.5-12h0m10-13h0m9-14h0m7.5-14h0m6-14.5h0m5-15h0m-10.5 5h0m4.5-15h0m3-14.5h0m1.5-15h0m1-14.5h0m-.5-15h0m-2-14.5h0m-2.5-15h0m-3.5-14h0m-5-14h0m-5.5-14h0m-6-13.5h0m-7.5-13h0m-7.5-12.5h0m-8.5-12h0m-9.5-11.5h0m-9.5-11.5h0m-10.5-10.5h0m-11-10h0m-11-9.5h0m-11.5-9h0m-12-8h0m-12.5-8h0m-12.5-7h0m-13-6.5h0m-13-6h0m-13.5-5.5h0m-13-5h0m-13.5-4h0m-13.5-3.5h0m-14-3h0m-13.5-2.5h0m-13.5-1.5h0m-13.5-1.5h0m-13.5-.5h0m-13.5 .5h0m-13.5 .5h0m-13 1.5h0m-13 1.5h0m-13 2.5h0m-12.5 3.5h0m-12 3.5h0m-12 4.5h0m-12 5h0m-11 5.5h0m-11 6h0m-11 7h0m-10 7h0m-9.5 8h0m-9 8.5h0m-8.5 9h0m-8 10h0m-7.5 10h0m-6.5 10.5h0m-6 11.5h0m-5 11.5h0m-4 12.5h0m-3.5 12.5h0m-3 13h0m-1.5 13.5h0m-.5 14h0m0 14h0m1.5 14.5h0m2.5 15h0m3.5 14.5h0m5 15h0m6 14.5h0m7 15h0m8 14.5h0m9.5 14.5h0m10.5 14.5h0m12 13.5h0m12.5 13.5h0m14 12.5h0m15 12h0m16 11.5h0m16.5 10.5h0m17.5 9.5h0m18.5 8.5h0m19 7h0m19 6.5h0m20 5h0m20 3.5h0m20 2.5h0m20 1.5h0m20-.5h0m19.5-1.5h0m19-2.5h0m18.5-4.5h0m18-5h0m17-6.5h0m16-8h0m15.5-8.5h0m14-10h0m13-10.5h0m11.5-11.5h0m11-12.5h0m9-12.5h0m8-13.5h0m7-14h0m-11 3.5h0m6-13.5h0m5-14h0m3.5-14h0m2.5-14.5h0m1.5-14.5h0m.5-14h0m-1-14.5h0m-2-14.5h0m-3-14h0m-3.5-14h0m-5-13.5h0m-5.5-13h0m-6.5-13h0m-7-12.5h0m-8-12h0m-8.5-12h0m-9.5-11h0m-9.5-10.5h0m-10.5-10h0m-10.5-10h0m-11-9h0m-11.5-8.5h0m-12-8h0m-12-7.5h0m-12.5-6.5h0m-12.5-6.5h0m-13-5.5h0m-13-5h0m-13-4.5h0m-13.5-4h0m-13-3h0m-13.5-2.5h0m-13-2.5h0m-13.5-1h0m-13.5-1h0m-13-.5h0m-13 .5h0m-13 1h0m-13 1.5h0m-12.5 2h0m-12.5 2.5h0m-12 3.5h0m-12 4h0m-11.5 4.5h0m-11.5 5h0m-11 5.5h0m-10.5 6.5h0m-10 7h0m-9.5 7.5h0m-9 8h0m-9 8.5h0m-8 9h0m-7.5 9.5h0m-6.5 10.5h0m-6.5 10.5h0m-5 11.5h0m-5 11.5h0m-3.5 12h0m-3 12.5h0m-2 13h0m-1.5 13.5h0m0 13.5h0m1 14h0m1.5 14h0m3 14h0m4 14.5h0m5.5 14.5h0m6 14.5h0m7.5 14.5h0m8.5 14h0m9.5 14h0m11 13.5h0m12 13h0m13 12.5h0m13.5 12h0m15 11.5h0m16 10.5h0m16.5 9.5h0m17.5 9h0m18 7.5h0m18.5 7h0m19 5.5h0m19 4.5h0m19.5 3h0m19.5 2h0m19 .5h0m19-1h0m19-2h0m18.5-3h0m17.5-4.5h0m17-5.5h0m16.5-7h0m15-8h0m14.5-8.5h0m13-10h0m12.5-10.5h0m11-11.5h0m10-12h0m8.5-12.5h0m-12 2h0m8-12h0m7-13h0m5.5-13.5h0m4.5-13.5h0m3-14h0m2-14h0m1-14h0m0-14h0m-1-13.5h0m-2.5-14h0m-3-13.5h0m-4-13.5h0m-5-13h0m-5.5-13h0m-6.5-12.5h0m-7.5-12h0m-8-11.5h0m-8.5-11.5h0m-9-10.5h0m-9.5-10h0m-10.5-10h0m-10.5-9h0m-11-9h0m-11-8h0m-12-7.5h0m-12-7h0m-12-6.5h0m-12.5-6h0m-12.5-5h0m-13-5h0m-12.5-4h0m-13-3.5h0m-13-3h0m-13-2.5h0m-13-1.5h0m-13-1.5h0m-13-.5h0m-13 0h0m-13 .5h0m-12.5 1.5h0m-12.5 1.5h0m-12 2.5h0m-12 3h0m-12 3h0m-11.5 4.5h0m-11.5 4.5h0m-10.5 5h0m-10.5 6h0m-10.5 6.5h0m-9.5 7h0m-9 7.5h0m-9 8h0m-8 8.5h0m-7.5 9h0m-7 10h0m-6.5 10h0m-5.5 10.5h0m-5 11.5h0m-4 11.5h0m-3.5 12h0m-2.5 12.5h0m-1.5 12.5h0m-.5 13h0m0 13.5h0m1.5 13.5h0m2.5 14h0m3 14h0m4.5 14h0m5.5 14h0m6.5 14h0m8 13.5h0m9 14h0m9.5 13h0m11 13h0m12 12.5h0m13 12h0m14 11.5h0m15 10.5h0m15.5 10h0m16.5 9h0m17 8h0m18 7h0m18 6h0m18.5 5h0m18.5 3.5h0m19 2.5h0m18.5 1.5h0m19 0h0m18-1h0m18-2.5h0m18-3.5h0m16.5-5h0m16.5-6h0m15.5-7h0m14.5-8h0m13.5-8.5h0m12.5-10h0m11-10.5h0m10.5-11.5h0m-12 1.5h0m9.5-11.5h0m8.5-11.5h0m7-12.5h0m6.5-12.5h0m5-13h0m4-13.5h0m2.5-13.5h0m1.5-13.5h0m1-13.5h0m-.5-13.5h0m-1.5-13.5h0m-2.5-13.5h0m-3.5-13h0m-4-13h0m-5-12.5h0m-6-12.5h0m-6.5-12h0m-7.5-11.5h0m-8-11.5h0m-8.5-10.5h0m-9-10.5h0m-9.5-9.5h0m-10-9.5h0m-10.5-8.5h0m-11-8.5h0m-11-7.5h0m-11.5-7.5h0m-12-6.5h0m-12-6h0m-12-5.5h0m-12.5-5h0m-12.5-4.5h0m-12.5-4h0m-13-3h0m-12.5-2.5h0m-13-2.5h0m-12.5-1.5h0m-12.5-1h0m-13 0h0m-12.5 0h0m-12.5 1h0m-12 1h0m-12 2h0m-12 2.5h0m-12 3.5h0m-11.5 3.5h0m-11 4h0m-10.5 5h0m-10.5 5.5h0m-10.5 6h0m-9.5 6h0m-9 7.5h0m-9 7.5h0m-8 8h0m-8 8.5h0m-7 9.5h0m-6.5 9.5h0m-6 10h0m-5 10.5h0m-4.5 11.5h0m-3.5 11.5h0m-3 11.5h0m-2 12.5h0m-1 12.5h0m-.5 13h0m1 13h0m1.5 13.5h0m3 13h0m3.5 14h0m5 13.5h0m6 13.5h0m7 13.5h0m8 13.5h0m9 13h0m10 12.5h0m11 12.5h0m12 12h0m13 11.5h0m14 10.5h0m15 10h0m15.5 9h0m16 8.5h0m17 7.5h0m17.5 6h0m17.5 5.5h0m18 4.5h0m18 3h0m18.5 2h0m18 .5h0m18-.5h0m18-1.5h0m17-2.5h0m17-4h0m16-5h0m15.5-6.5h0m14.5-7h0m13.5-8h0m13-9h0m11.5-9.5h0m-12-.5h0m11-9.5h0m10-10.5h0m8.5-11h0m8-11.5h0m6.5-12h0m6-12.5h0m4.5-12.5h0m3-13h0m2.5-13.5h0m1.5-13h0m0-13h0m-.5-13.5h0m-2-13h0m-2.5-13h0m-3.5-12.5h0m-4.5-12.5h0m-5.5-12.5h0m-5.5-11.5h0m-7-12h0m-7-11h0m-8-10.5h0m-8.5-10.5h0m-9-10h0m-9.5-9.5h0m-10-8.5h0m-10.5-8.5h0m-10.5-8h0m-11-7.5h0m-11.5-6.5h0m-11.5-6.5h0m-12-5.5h0m-12-5.5h0m-12-4.5h0m-12.5-4h0m-12-3.5h0m-12.5-3h0m-12.5-2.5h0m-12.5-2h0m-12.5-1h0m-12.5-.5h0m-12.5-.5h0m-12 .5h0m-12 1h0m-12 1.5h0m-12 2.5h0m-11.5 2.5h0m-11 3h0m-11.5 4h0m-10.5 4.5h0m-10.5 5h0m-10 5.5h0m-9.5 6h0m-9.5 6.5h0m-9 7h0m-8 8h0m-8 8h0m-7 8.5h0m-7 9.5h0m-6 9.5h0m-5.5 10h0m-4.5 10.5h0m-4 11h0m-3 11.5h0m-2.5 11.5h0m-1.5 12h0m-.5 12.5h0m0 12.5h0m1 13h0m2.5 13h0m3 13.5h0m4 13h0m5.5 13h0m6 13.5h0m7 13h0m8.5 12.5h0m9 12.5h0m10.5 12.5h0m11 11.5h0m12.5 11.5h0m13 11h0m14 10h0m14.5 9h0m15.5 8.5h0m16 8h0m16.5 6.5h0m17 6h0m17 4.5h0m17.5 3.5h0m18 3h0m17.5 1h0m17.5 .5h0m17.5-1h0m17-2h0m16.5-3h0m16-4.5h0m15.5-5h0m14.5-6.5h0m14-7h0m12.5-8.5h0m-12-1h0m12-8.5h0m11.5-9h0m10-9.5h0m9.5-10.5h0m8.5-10.5h0m7-11.5h0m6-12h0m5.5-12h0m4-12.5h0m2.5-12.5h0m2-13h0m1-12.5h0m0-13h0m-1-13h0m-2-12.5h0m-3-12.5h0m-4-12.5h0m-4.5-12h0m-5-11.5h0m-6-11.5h0m-7-11.5h0m-7.5-10.5h0m-7.5-10.5h0m-8.5-10h0m-9-9h0m-9.5-9h0m-10-8.5h0m-10-8.5h0m-10.5-7.5h0m-11-7h0m-11-6.5h0m-11.5-5.5h0m-12-5.5h0m-11.5-5h0m-12-4.5h0m-12-3.5h0m-12-3.5h0m-12.5-2.5h0m-12-2h0m-12-1.5h0m-12.5-1h0m-12-.5h0m-12 0h0m-12 .5h0m-11.5 1.5h0m-12 1.5h0m-11.5 2.5h0m-11 3h0m-11 3h0m-10.5 4h0m-10.5 4.5h0m-10 5.5h0m-9.5 5.5h0m-9.5 6h0m-9 6.5h0m-8 7.5h0m-8 7.5h0m-7.5 8h0m-7 9h0m-6 9h0m-5.5 9.5h0m-5 10.5h0m-4.5 10h0m-3.5 11h0m-2.5 11.5h0m-2 11.5h0m-1 12h0m-.5 12h0m1 12.5h0m1.5 12.5h0m2.5 12.5h0m3.5 13h0m4.5 13h0m5.5 12.5h0m6.5 13h0m7.5 12.5h0m8.5 12.5h0m9.5 12h0m10.5 11.5h0m11 11h0m12.5 11h0m13 10h0m13.5 9.5h0m15 8.5h0m15 8h0m15.5 7h0m16.5 6.5h0m16.5 5h0m17 4h0m17 3h0m17 2h0m17 1h0m17 0h0m16.5-1.5h0m16.5-2.5h0m16-3.5h0m15-4.5h0m15-5.5h0m13.5-6.5h0m-12-2.5h0m13-6.5h0m12.5-7.5h0m11.5-8h0m11-9h0m9.5-9.5h0m8.5-10.5h0m8-10.5h0m6.5-11.5h0m5.5-11.5h0m4.5-12h0m3.5-12h0m2.5-12h0m1.5-12.5h0m.5-12.5h0m0-12.5h0m-1.5-12.5h0m-2.5-12.5h0m-3-12h0m-4-12h0m-4.5-11.5h0m-5.5-11.5h0m-6-11h0m-7-10.5h0m-7-10.5h0m-8-10h0m-8.5-9.5h0m-9-9h0m-9-8.5h0m-10-8h0m-10-8h0m-10.5-7h0m-10.5-6.5h0m-11-6.5h0m-11.5-5.5h0m-11.5-5h0m-11.5-4.5h0m-11.5-4h0m-12-3.5h0m-12-3h0m-11.5-2.5h0m-12-2h0m-12-1h0m-12-1h0m-12 0h0m-11.5 0h0m-11.5 1h0m-11.5 1.5h0m-11.5 2h0m-11 2.5h0m-11 3h0m-10.5 3.5h0m-10 4h0m-10 5h0m-10 5h0m-9 6h0m-9 6h0m-8.5 6.5h0m-8 7.5h0m-7.5 7.5h0m-7 8.5h0m-6.5 8.5h0m-5.5 9.5h0m-5.5 9.5h0m-4 10h0m-4 10.5h0m-3 10.5h0m-2.5 11h0m-1.5 11.5h0m-.5 12h0m0 11.5h0m1.5 12.5h0m2 12h0m2.5 12.5h0m4 12.5h0m5 12.5h0m5.5 12.5h0m7 12h0m7.5 12.5h0m9 11.5h0m9.5 11.5h0m10.5 11.5h0m11.5 10.5h0m12 10h0m13 9.5h0m14 9h0m14 8h0m15 7.5h0m15.5 6.5h0m16 5.5h0m16 4.5h0m16.5 3.5h0m16.5 2.5h0m17 1.5h0m16.5 .5h0m16-.5h0m16-2h0m16-2.5h0m15-4h0m14.5-4.5h0m-11.5-3.5h0m13.5-5h0m13.5-6h0m12.5-6.5h0m11.5-7.5h0m11-8.5h0m10-9h0m9-9.5h0m8-10h0m7-10.5h0m6.5-11h0m5-11.5h0m4-11.5h0m3-12h0m2-12h0m1.5-12h0m0-12h0m-.5-12.5h0m-2-12h0m-2.5-11.5h0m-3-12h0m-4-11.5h0m-5-11h0m-5.5-11h0m-6-11h0m-7-10h0m-7.5-10h0m-7.5-9.5h0m-8.5-9h0m-9-9h0m-9-8h0m-10-8h0m-10-7h0m-10-7h0m-10.5-6.5h0m-11-5.5h0m-11-5.5h0m-11-4.5h0m-11.5-4.5h0m-11.5-3.5h0m-11.5-3.5h0m-12-2.5h0m-11.5-2h0m-11.5-2h0m-12-1h0m-11.5-.5h0m-11.5 0h0m-11.5 .5h0m-11 1h0m-11 2h0m-11 2h0m-11 2.5h0m-10.5 3.5h0m-10 3.5h0m-10 4.5h0m-9.5 4.5h0m-9.5 5.5h0m-9 5.5h0m-8.5 6.5h0m-8 6.5h0m-7.5 7.5h0m-7 8h0m-6.5 8h0m-6 8.5h0m-5.5 9.5h0m-4.5 9.5h0m-4.5 10h0m-3 10h0m-2.5 10.5h0m-2 11h0m-1 11.5h0m-.5 11.5h0m.5 11.5h0m1.5 12h0m2.5 12h0m3.5 12h0m4 12.5h0m5 12h0m6 12h0m7 12h0m8 11.5h0m9 11.5h0m9.5 11h0m11 10.5h0m11 10h0m12.5 9.5h0m13 9h0m13.5 8h0m14 8h0m15 6.5h0m15 6h0m15.5 5h0m16 4h0m16 3h0m16 2h0m16 1h0m16 0h0m16-1h0m15.5-2h0m15-3h0m-11.5-4.5h0m14.5-3.5h0m13.5-4.5h0m13.5-5h0m12.5-6h0m12-6.5h0m11-8h0m10-8h0m9.5-9h0m8.5-9.5h0m7.5-10h0m6.5-10.5h0m5.5-10.5h0m4.5-11.5h0m4-11h0m2.5-11.5h0m1.5-12h0m1-11.5h0m0-12h0m-1-11.5h0m-2-12h0m-2.5-11.5h0m-3.5-11h0m-4.5-11.5h0m-5-10.5h0m-5.5-10.5h0m-6-10.5h0m-7-10h0m-7-9.5h0m-8-9h0m-8.5-9h0m-8.5-8h0m-9.5-8h0m-9.5-7.5h0m-10-7h0m-10-6.5h0m-10.5-6h0m-10.5-5.5h0m-11-5h0m-11-4.5h0m-11-4h0m-11.5-3.5h0m-11-2.5h0m-11.5-2.5h0m-11.5-2h0m-11.5-1.5h0m-11-.5h0m-11.5-.5h0m-11 0h0m-11.5 1h0m-11 1h0m-10.5 2h0m-11 2.5h0m-10 2.5h0m-10.5 3.5h0m-9.5 4h0m-10 4h0m-9 5h0m-9 5.5h0m-8.5 6h0m-8 6.5h0m-8 6.5h0m-7 7.5h0m-6.5 7.5h0m-6 8.5h0m-6 8.5h0m-4.5 9h0m-4.5 9.5h0m-3.5 10h0m-3 10.5h0m-2.5 10.5h0m-1.5 10.5h0m-.5 11h0m0 11.5h0m1 11.5h0m2 11.5h0m3 12h0m3.5 11.5h0m4.5 12h0m5.5 11.5h0m6 11.5h0m7.5 11.5h0m8 11h0m9 11h0m10 10.5h0m10.5 10h0m11.5 10h0m12 9h0m13 8h0m13.5 8h0m14 7h0m14.5 6h0m15 5.5h0m15 4h0m15.5 3.5h0m15.5 3h0m15.5 1.5h0m15.5 .5h0m15.5-.5h0m15-1.5h0m-10.5-5.5h0m14.5-1.5h0m14.5-2.5h0m13.5-3.5h0m13.5-4.5h0m12.5-5.5h0m12-6h0m11-7h0m10.5-7.5h0m9.5-8.5h0m9-8.5h0m8-9.5h0m7-10h0m6-10h0m5-11h0m4-10.5h0m3-11.5h0m2.5-11h0m1.5-11.5h0m0-11.5h0m0-11.5h0m-1.5-11.5h0m-2-11h0m-3-11h0m-3.5-11h0m-4.5-11h0m-5-10.5h0m-5.5-10h0m-6.5-10h0m-6.5-9.5h0m-7.5-9h0m-8-9h0m-8-8.5h0m-9-8h0m-9-7.5h0m-9.5-7h0m-9.5-6.5h0m-10-6h0m-10.5-6h0m-10.5-5h0m-10.5-4.5h0m-11-4.5h0m-11-3.5h0m-11-3.5h0m-11-2.5h0m-11-2h0m-11-1.5h0m-11.5-1.5h0m-11-.5h0m-11 0h0m-11 .5h0m-10.5 1h0m-11 1h0m-10.5 2h0m-10 2.5h0m-10.5 3h0m-9.5 3.5h0m-9.5 4h0m-9.5 4.5h0m-9 5h0m-8.5 5.5h0m-8 6h0m-7.5 6.5h0m-7.5 7h0m-6.5 7.5h0m-6.5 7.5h0m-5.5 8.5h0m-5.5 8.5h0m-4.5 9h0m-3.5 9.5h0m-3.5 9.5h0m-2.5 10h0m-2 10.5h0m-1 11h0m0 10.5h0m.5 11h0m1 11.5h0m2.5 11.5h0m3 11.5h0m4 11h0m4.5 11.5h0m6 11.5h0m6.5 11h0m7.5 11h0m8 11h0m9.5 10.5h0m9.5 10h0m11 9.5h0m11.5 9h0m12 8.5h0m12.5 7.5h0m13.5 7.5h0m14 6.5h0m14 5.5h0m14.5 4.5h0m15 4h0m15 3h0m15 2h0m15.5 1.5h0m15 0h0m-10-6h0m14.5-.5h0m14.5-1h0m14-2h0m13.5-3h0m13-4h0m12.5-4.5h0m12-5.5h0m11.5-6h0m10.5-7h0m10-7.5h0m9-8.5h0m8-8.5h0m7.5-9.5h0m6.5-9.5h0m5.5-10h0m4.5-10.5h0m3.5-11h0m3-10.5h0m2-11h0m1-11.5h0m0-11h0m-.5-11h0m-1.5-11h0m-2.5-11h0m-3-11h0m-4-10.5h0m-4-10.5h0m-5.5-10h0m-5.5-9.5h0m-6.5-9.5h0m-6.5-9.5h0m-7.5-8.5h0m-8-8.5h0m-8-8h0m-8.5-8h0m-9-7h0m-9.5-6.5h0m-9.5-6.5h0m-10-6h0m-10-5h0m-10.5-5h0m-10.5-4.5h0m-10.5-4h0m-11-3.5h0m-10.5-2.5h0m-11-2.5h0m-11-2h0m-11-1.5h0m-10.5-1h0m-11 0h0m-10.5 0h0m-11 .5h0m-10.5 1h0m-10 2h0m-10.5 2h0m-10 2.5h0m-9.5 3h0m-9.5 4h0m-9.5 4h0m-8.5 4.5h0m-8.5 5h0m-8.5 5.5h0m-7.5 6h0m-7.5 6.5h0m-7 7h0m-6.5 7.5h0m-5.5 8h0m-5.5 8h0m-4.5 8.5h0m-4.5 9h0m-3.5 9.5h0m-2.5 9.5h0m-2.5 10h0m-1 10.5h0m-1 10.5h0m0 10.5h0m1 11h0m2 11h0m2.5 11h0m3 11h0m4.5 11h0m5 11h0m6 11h0m6.5 11h0m7.5 10.5h0m8.5 10.5h0m9.5 9.5h0m10 9.5h0m10.5 9.5h0m11.5 8.5h0m12 8h0m12.5 7h0m13 6.5h0m14 6h0m14 5h0m14 4.5h0m14.5 3.5h0m14.5 2.5h0m15 1.5h0m-9-6.5h0m14 1h0m14.5 .5h0m14-.5h0m13.5-1.5h0m13.5-2.5h0m13-3h0m12.5-4h0m12-5h0m11.5-5.5h0m11-6.5h0m10-7h0m9-7.5h0m8.5-8h0m7.5-9h0m7-9h0m6-9.5h0m5-10h0m4-10h0m3.5-10.5h0m2.5-10.5h0m1.5-11h0m.5-10.5h0m0-11h0m-1-11h0m-2-10.5h0m-2.5-10.5h0m-3-10.5h0m-4-10.5h0m-4.5-10h0m-5-9.5h0m-6-9.5h0m-6-9.5h0m-7-8.5h0m-7.5-8.5h0m-7.5-8h0m-8.5-8h0m-8.5-7h0m-9-7h0m-9-6.5h0m-9.5-6h0m-9.5-5.5h0m-10-5h0m-10.5-4.5h0m-10-4h0m-10.5-4h0m-10.5-3h0m-10.5-2.5h0m-11-2h0m-10.5-2h0m-10.5-1h0m-10.5-1h0m-11 0h0m-10.5 .5h0m-10 .5h0m-10.5 1.5h0m-10 2h0m-10 2h0m-9.5 3h0m-9.5 3h0m-9 4h0m-9 4h0m-8.5 5h0m-8 5h0m-8 5.5h0m-7.5 6h0m-6.5 7h0m-6.5 6.5h0m-6 7.5h0m-5.5 8h0m-5 8h0m-4.5 8.5h0m-3.5 9h0m-3.5 9.5h0m-2.5 9.5h0m-1.5 9.5h0m-1 10.5h0m-.5 10h0m.5 10.5h0m1.5 10.5h0m2 11h0m2.5 10.5h0m4 11h0m4.5 11h0m5 10.5h0m6 10.5h0m7 10.5h0m8 10h0m8.5 10h0m9 9.5h0m10 9h0m11 8.5h0m11.5 8h0m11.5 7.5h0m12.5 7h0m13 6h0m13.5 5.5h0m13.5 4.5h0m14 4h0m14.5 3h0m-8-7.5h0m13.5 2.5h0m14 1.5h0m14 1h0m13.5 0h0m13.5-1h0m13-1.5h0m13-2.5h0m12.5-3.5h0m12-4.5h0m11.5-5h0m11-5.5h0m10-6.5h0m9.5-7h0m8.5-7.5h0m8-8h0m7-8.5h0m6.5-9h0m5.5-9.5h0m4.5-10h0m4-10h0m2.5-10h0m2-10.5h0m1.5-10.5h0m.5-10.5h0m-.5-10.5h0m-1.5-10.5h0m-2-10.5h0m-2.5-10h0m-3.5-10h0m-4-10h0m-4.5-9.5h0m-5.5-9.5h0m-5.5-9.5h0m-6.5-8.5h0m-7-8.5h0m-7-8h0m-8-8h0m-8-7.5h0m-8.5-7h0m-8.5-6.5h0m-9.5-6h0m-9-5.5h0m-9.5-5.5h0m-10-4.5h0m-10-4.5h0m-10-3.5h0m-10.5-3.5h0m-10-3h0m-10.5-2.5h0m-10.5-2h0m-10.5-1h0m-10.5-1h0m-10-.5h0m-10.5 0h0m-10 .5h0m-10 1h0m-10 1.5h0m-10 2h0m-9.5 2h0m-9.5 3h0m-9 3.5h0m-8.5 4h0m-8.5 4.5h0m-8.5 4.5h0m-7.5 5.5h0m-7.5 5.5h0m-7 6h0m-7 6.5h0m-6 7h0m-5.5 7.5h0m-5 8h0m-4.5 8h0m-4 8.5h0m-3.5 9h0m-3 9h0m-2 9.5h0m-1.5 9.5h0m-.5 10h0m0 10h0m1 10.5h0m1.5 10.5h0m2.5 10.5h0m3 10.5h0m4 10.5h0m4.5 10.5h0m5.5 10h0m6.5 10.5h0m7 10h0m8 9.5h0m8.5 9.5h0m9.5 9h0m10 8.5h0m10.5 8h0m11.5 7.5h0m11.5 7h0m12.5 6.5h0m13 5.5h0m13 5h0m13.5 4h0m-7-7.5h0m13 4h0m13.5 2.5h0m13 2.5h0m13.5 1h0m13.5 .5h0m13-.5h0m13-1h0m13-2h0m12.5-3h0m11.5-3.5h0m11.5-4.5h0m11-5h0m10.5-5.5h0m9.5-6.5h0m9-7h0m8-7.5h0m7.5-8.5h0m6.5-8.5h0m6-8.5h0m5-9.5h0m4-9.5h0m3.5-10h0m2.5-10h0m1.5-10h0m1-10h0m0-10.5h0m-.5-10h0m-1.5-10h0m-2-10.5h0m-3-9.5h0m-3.5-10h0m-4-9.5h0m-5-9.5h0m-5.5-9h0m-5.5-9h0m-6.5-8h0m-7-8.5h0m-7-7.5h0m-8-7.5h0m-8-7h0m-8-7h0m-9-6h0m-9-6h0m-9-5h0m-9.5-5h0m-9.5-4.5h0m-10-4h0m-10-3.5h0m-10-3.5h0m-10-2.5h0m-10-2h0m-10.5-2h0m-10-1h0m-10-1h0m-10.5 0h0m-10 0h0m-10 1h0m-9.5 1h0m-9.5 1.5h0m-9.5 2.5h0m-9.5 2.5h0m-9 3h0m-8.5 3.5h0m-8.5 4h0m-8.5 4.5h0m-7.5 5h0m-7.5 5h0m-7.5 6h0m-6.5 6h0m-6 6.5h0m-6 7h0m-5 7.5h0m-5 8h0m-4 8h0m-4 8.5h0m-3 8.5h0m-2 9h0m-2 9.5h0m-1 9.5h0m0 9.5h0m0 10h0m1.5 10h0m1.5 10.5h0m3 10h0m3 10.5h0m4.5 10h0m5 10h0m5.5 10h0m6.5 10h0m7.5 9.5h0m8 9.5h0m8.5 9h0m9.5 8.5h0m10 8h0m10.5 7.5h0m11.5 7h0m11.5 6.5h0m12 6h0m12.5 5h0m-5.5-7.5h0m12 4.5h0m12.5 4h0m13 3.5h0m13 2.5h0m13 1.5h0m13 1h0m13 0h0m12.5-.5h0m12.5-1.5h0m12.5-2.5h0m11.5-3h0m11.5-3.5h0m11-4.5h0m10.5-5.5h0m9.5-5.5h0m9-6.5h0m8.5-7h0m7.5-7.5h0m7-8h0m6.5-8.5h0m5-9h0m4.5-9h0m4-9.5h0m3-9.5h0m2-9.5h0m1.5-10h0m.5-10h0m0-10h0m-1-10h0m-1.5-10h0m-2.5-9.5h0m-3-9.5h0m-3.5-9.5h0m-4.5-9.5h0m-4.5-9h0m-5.5-8.5h0m-6-8.5h0m-6.5-8h0m-6.5-8h0m-7.5-7.5h0m-7.5-7h0m-8-7h0m-8.5-6h0m-8.5-6h0m-9-5.5h0m-9-5h0m-9-5h0m-9.5-4h0m-10-4h0m-9.5-3h0m-10-3h0m-9.5-2.5h0m-10-2h0m-10-1.5h0m-10-1h0m-10-.5h0m-10 0h0m-9.5 .5h0m-9.5 1h0m-9.5 1h0m-9.5 2h0m-9.5 2.5h0m-8.5 2.5h0m-9 3h0m-8.5 4h0m-8 4h0m-8 4.5h0m-7.5 5h0m-7 5.5h0m-7 5.5h0m-6 6.5h0m-6 6.5h0m-5.5 7h0m-5 7.5h0m-4 7.5h0m-4 8h0m-3 8.5h0m-3 8.5h0m-2 9h0m-1.5 9h0m-.5 9.5h0m0 9.5h0m.5 10h0m1.5 9.5h0m2.5 10h0m2.5 10h0m4 10h0m4.5 10h0m5 9.5h0m6 10h0m6.5 9.5h0m7.5 9h0m8 9h0m9 8.5h0m9 8h0m10 7.5h0m10.5 7.5h0m11.5 6.5h0m11.5 6h0m-5-8h0m11.5 6h0m12 4.5h0m12 4.5h0m12 3.5h0m12.5 3h0m13 2h0m12.5 1.5h0m12.5 .5h0m12.5 0h0m12-1h0m12.5-2h0m11.5-2.5h0m11.5-3h0m10.5-4h0m10.5-5h0m10-5h0m9-6h0m8.5-6.5h0m8-7h0m7.5-7.5h0m6-8h0m6-8h0m5-9h0m4-9h0m3.5-9h0m2.5-9.5h0m2-9.5h0m1-9.5h0m0-9.5h0m-.5-10h0m-1-9.5h0m-2-9.5h0m-2.5-9.5h0m-3-9.5h0m-3.5-9h0m-4.5-9h0m-5-8.5h0m-5.5-8.5h0m-5.5-8h0m-6.5-8h0m-7-7.5h0m-7-7h0m-7.5-7h0m-8-6.5h0m-8.5-6h0m-8.5-5.5h0m-8.5-5.5h0m-9-4.5h0m-9-4.5h0m-9.5-4h0m-9.5-3.5h0m-9.5-3h0m-9.5-2.5h0m-9.5-2.5h0m-10-1.5h0m-9.5-1h0m-10-1h0m-9.5-.5h0m-9.5 0h0m-9.5 1h0m-9.5 1h0m-9.5 1.5h0m-9 2h0m-8.5 2h0m-9 3h0m-8 3.5h0m-8.5 3.5h0m-7.5 4.5h0m-7.5 4.5h0m-7.5 5h0m-6.5 5.5h0m-6.5 5.5h0m-6 6.5h0m-5.5 6.5h0m-5 7h0m-4.5 7.5h0m-4.5 7.5h0m-3 8h0m-3 8.5h0m-2.5 8.5h0m-1.5 9h0m-1 9h0m-.5 9h0m.5 9.5h0m1 9.5h0m1.5 9.5h0m2.5 9.5h0m3 10h0m4 9.5h0m4.5 9.5h0m5.5 9.5h0m6 9.5h0m7 9h0m7.5 8.5h0m8 8.5h0m9 8.5h0m9 7.5h0m10 7.5h0m10.5 6.5h0m-3.5-8h0m10.5 6.5h0m10.5 6h0m11.5 5h0m11.5 4.5h0m12 4h0m12 3h0m12 2.5h0m12.5 1.5h0m12 1h0m12 .5h0m12-.5h0m12-1.5h0m11.5-2h0m11.5-2.5h0m10.5-3.5h0m10.5-4h0m10-5h0m9.5-5h0m8.5-6h0m8-6.5h0m7.5-7h0m6.5-7.5h0m6-8h0m5.5-8h0m4.5-8.5h0m3.5-9h0m3.5-9h0m2-9h0m1.5-9.5h0m1-9h0m0-9.5h0m-1-9.5h0m-1-9.5h0m-2-9h0m-3-9.5h0m-3-9h0m-4-8.5h0m-4.5-9h0m-5-8h0m-5.5-8.5h0m-6-7.5h0m-6-7.5h0m-7-7.5h0m-7-6.5h0m-7.5-6.5h0m-8-6.5h0m-8-5.5h0m-8.5-5.5h0m-8.5-5h0m-9-4.5h0m-9-4h0m-9-3.5h0m-9.5-3.5h0m-9-3h0m-9.5-2h0m-9.5-2h0m-9.5-1.5h0m-9.5-1h0m-9.5-.5h0m-9.5-.5h0m-9.5 .5h0m-9 .5h0m-9 1.5h0m-9 1.5h0m-9 2h0m-8.5 2.5h0m-8.5 3h0m-8 3.5h0m-7.5 4h0m-7.5 4h0m-7.5 5h0m-7 5h0m-6.5 5.5h0m-6 6h0m-5.5 6h0m-5 6.5h0m-5 7h0m-4 7.5h0m-4 7.5h0m-3 8h0m-2.5 8h0m-2 8.5h0m-1.5 9h0m-.5 8.5h0m0 9.5h0m.5 9h0m1.5 9.5h0m2 9h0m2.5 9.5h0m3.5 9.5h0m4 9.5h0m5 9h0m5.5 9h0m6 9h0m7 9h0m7.5 8.5h0m8.5 8h0m8.5 7.5h0m9.5 7.5h0m-2.5-8h0m9 7h0m10 6.5h0m10.5 6h0m10.5 5.5h0m11 4.5h0m11.5 4h0m11.5 3.5h0m11.5 3h0m12 2h0m12 1.5h0m12 .5h0m11.5 0h0m11.5-1h0m11.5-1.5h0m11-2h0m11-3h0m10.5-3.5h0m9.5-4h0m9.5-5h0m9-5.5h0m8-6h0m8-6.5h0m7-7h0m6-7.5h0m5.5-7.5h0m5-8h0m4-8.5h0m3.5-8.5h0m2.5-9h0m2-9h0m1-9h0m.5-9h0m0-9.5h0m-1-9h0m-1.5-9h0m-2-9h0m-3-9h0m-3.5-8.5h0m-4-8.5h0m-4.5-8.5h0m-5-8h0m-5-8h0m-6-7.5h0m-6.5-7h0m-7-7h0m-7-6.5h0m-7.5-6h0m-7.5-6h0m-8-5.5h0m-8.5-5h0m-8.5-5h0m-8.5-4h0m-9-4h0m-9-3.5h0m-9-3h0m-9-2.5h0m-9.5-2h0m-9-2h0m-9.5-1h0m-9.5-1h0m-9-.5h0m-9 0h0m-9.5 .5h0m-8.5 1h0m-9 1.5h0m-8.5 1.5h0m-8.5 2.5h0m-8.5 2.5h0m-8 3h0m-8 3.5h0m-7.5 4h0m-7 4.5h0m-7 4.5h0m-6.5 5.5h0m-6 5.5h0m-6 5.5h0m-5 6.5h0m-5 6.5h0m-4.5 7h0m-4 7.5h0m-3 7.5h0m-3 8h0m-2 8h0m-2 8h0m-1 9h0m-.5 8.5h0m.5 9h0m1 9h0m1.5 9h0m2 9h0m3 9.5h0m4 9h0m4 9h0m5 9h0m6 8.5h0m6 9h0m7 8h0m8 8h0m8 8h0m-2-7.5h0m8.5 7.5h0m9 6.5h0m9 6.5h0m10 6h0m10 5.5h0m10.5 5h0m11 4.5h0m11 3.5h0m11.5 3.5h0m11.5 2.5h0m11.5 1.5h0m11.5 1h0m11.5 .5h0m11.5-.5h0m11-1h0m11-1.5h0m10.5-2.5h0m10.5-3h0m10-4h0m9-4.5h0m9-4.5h0m8.5-5.5h0m7.5-6h0m7.5-6.5h0m6.5-7h0m6-7.5h0m5-7.5h0m4.5-8h0m3.5-8.5h0m3-8h0m2.5-9h0m1.5-8.5h0m1-9h0m0-9h0m0-9h0m-1.5-8.5h0m-1.5-9h0m-2.5-8.5h0m-3-8.5h0m-3.5-8.5h0m-4-8.5h0m-4.5-8h0m-5-7.5h0m-5.5-7.5h0m-6-7.5h0m-6.5-7h0m-6.5-6.5h0m-7-6.5h0m-7.5-5.5h0m-7.5-6h0m-8-5h0m-8-5h0m-8.5-4h0m-8.5-4h0m-9-4h0m-8.5-3h0m-9-3h0m-9-2h0m-9-2h0m-9-1.5h0m-9-1h0m-9.5-1h0m-9 0h0m-8.5 0h0m-9 1h0m-9 1h0m-8.5 1.5h0m-8 2h0m-8.5 2h0m-8 3h0m-7.5 3h0m-7.5 3.5h0m-7.5 4h0m-7 4.5h0m-6.5 5h0m-6 5h0m-6 5.5h0m-5.5 6h0m-5 6.5h0m-4.5 6.5h0m-4 7h0m-3.5 7h0m-3 7.5h0m-2.5 8h0m-2 8h0m-1 8h0m-1 8.5h0m0 8.5h0m.5 9h0m1 8.5h0m2 9h0m2.5 9h0m3 9h0m4 8.5h0m4.5 9h0m5 8.5h0m6 8.5h0m6.5 8.5h0m7 8h0m-1-7.5h0m7.5 7.5h0m7.5 7.5h0m8.5 7h0m8.5 6.5h0m9.5 6h0m9.5 5.5h0m10 5.5h0m10.5 4.5h0m10.5 4h0m11 3.5h0m11 2.5h0m11 2h0m11.5 1.5h0m11 1h0m11 0h0m11-1h0m11-1h0m10.5-2h0m10-2.5h0m10-3.5h0m9.5-3.5h0m9-4.5h0m8.5-5h0m8-5.5h0m7-6h0m7-6.5h0m6-7h0m5.5-7h0m4.5-8h0m4-7.5h0m3.5-8h0m3-8.5h0m2-8.5h0m1-8.5h0m1-8.5h0m0-9h0m-1-8.5h0m-1-8.5h0m-2-8.5h0m-2.5-8.5h0m-3-8.5h0m-3.5-8h0m-4.5-8h0m-4.5-7.5h0m-5-7.5h0m-5.5-7.5h0m-6-7h0m-6.5-6.5h0m-6.5-6.5h0m-7-6h0m-7.5-5.5h0m-7.5-5.5h0m-8-4.5h0m-8-5h0m-8-4h0m-8.5-3.5h0m-8.5-3.5h0m-8.5-3h0m-9-2.5h0m-8.5-2.5h0m-9-1.5h0m-9-1.5h0m-9-.5h0m-8.5-.5h0m-9-.5h0m-8.5 .5h0m-8.5 1h0m-8.5 1h0m-8.5 2h0m-8 2h0m-8 2.5h0m-7.5 2.5h0m-7.5 3.5h0m-7.5 3.5h0m-7 4.5h0m-6.5 4.5h0m-6 4.5h0m-6 5.5h0m-5.5 5.5h0m-5 6h0m-5 6h0m-4 6.5h0m-4 7h0m-3 7.5h0m-3 7h0m-2 8h0m-1.5 8h0m-1 8h0m-.5 8h0m0 8.5h0m1 8.5h0m1.5 8.5h0m2 9h0m2.5 8.5h0m3.5 8.5h0m4 9h0m5 8h0m5 8.5h0m6 8h0m0-6.5h0m6 7.5h0m6.5 7.5h0m7.5 7.5h0m7.5 7h0m8.5 6.5h0m8.5 6h0m9.5 6h0m9.5 5h0m9.5 5h0m10.5 4h0m10.5 3.5h0m10.5 3h0m11 2.5h0m10.5 2h0m11 1h0m11 .5h0m10.5 0h0m11-1h0m10-1.5h0m10.5-2.5h0m9.5-2.5h0m9.5-3.5h0m9-4h0m8.5-4.5h0m8-5h0m7.5-5.5h0m7-6h0m6-6.5h0m6-6.5h0m5-7.5h0m4.5-7.5h0m3.5-7.5h0m3-8h0m2.5-8h0m1.5-8.5h0m1-8h0m.5-8.5h0m0-8.5h0m-1-8.5h0m-1.5-8.5h0m-2-8h0m-2.5-8.5h0m-3.5-8h0m-3.5-7.5h0m-4-8h0m-5-7.5h0m-5-7h0m-5.5-7h0m-6-6.5h0m-6.5-6.5h0m-6.5-6h0m-7-6h0m-7-5h0m-7.5-5.5h0m-8-4.5h0m-8-4h0m-8-4h0m-8-3.5h0m-8.5-3.5h0m-8.5-2.5h0m-8.5-2.5h0m-8.5-2h0m-9-1.5h0m-8.5-1h0m-8.5-.5h0m-9-.5h0m-8.5 0h0m-8.5 .5h0m-8 1h0m-8.5 1.5h0m-8 1.5h0m-8 2.5h0m-7.5 2.5h0m-7.5 3h0m-7 3.5h0m-7 3.5h0m-6.5 4.5h0m-6.5 4.5h0m-6 5h0m-5.5 5h0m-5 5.5h0m-5 6h0m-4.5 6.5h0m-3.5 6.5h0m-3.5 6.5h0m-3 7.5h0m-2.5 7h0m-2 8h0m-1 7.5h0m-1 8h0m0 8h0m.5 8.5h0m1 8h0m1.5 8.5h0m2.5 8.5h0m3 8.5h0m3.5 8.5h0m4 8h0m5 8.5h0m.5-6.5h0m5 8h0m6 7.5h0m6 7.5h0m6.5 7h0m7.5 7h0m7.5 7h0m8.5 6h0m8.5 6h0m9 5h0m9.5 5h0m9.5 4.5h0m10.5 3.5h0m10 3.5h0m10.5 2.5h0m10.5 2.5h0m10.5 1h0m10.5 1h0m10.5 0h0m10.5 0h0m10-1.5h0m10-1.5h0m10-2.5h0m9-3h0m9-3.5h0m9-4h0m8-4.5h0m7.5-5h0m7-5.5h0m6.5-6h0m6-6.5h0m5-7h0m5-7h0m4-7h0m3.5-8h0m2.5-7.5h0m2-8h0m1.5-8h0m1-8h0m0-8.5h0m-.5-8h0m-1-8.5h0m-1.5-8h0m-2.5-8h0m-2.5-8h0m-3.5-7.5h0m-3.5-8h0m-4.5-7h0m-4.5-7.5h0m-5.5-7h0m-5.5-6.5h0m-6-6.5h0m-6-6h0m-6.5-5.5h0m-7-5.5h0m-7-5.5h0m-7.5-4.5h0m-7.5-4.5h0m-8-4h0m-8-4h0m-8-3h0m-8.5-3h0m-8-2.5h0m-8.5-2h0m-8.5-2h0m-8.5-1.5h0m-8.5-.5h0m-8.5-.5h0m-8.5-.5h0m-8 .5h0m-8.5 .5h0m-8 1.5h0m-8 1.5h0m-7.5 1.5h0m-8 2.5h0m-7 2.5h0m-7.5 3.5h0m-7 3h0m-6.5 4h0m-6 4.5h0m-6 4.5h0m-6 5h0m-5 5h0m-5 5.5h0m-4.5 6h0m-4 6.5h0m-3.5 6.5h0m-3.5 6.5h0m-2.5 7h0m-2 7.5h0m-1.5 7.5h0m-1 7.5h0m-.5 8h0m0 8h0m.5 8h0m1.5 8h0m2 8.5h0m2.5 8h0m3 8.5h0m4 8h0m1-6h0m4 7.5h0m4.5 8h0m5.5 7.5h0m5.5 7.5h0m6 7h0m7 7h0m7 6.5h0m8 6.5h0m8 6h0m8.5 5.5h0m9 5h0m9.5 4.5h0m9.5 4h0m10 3.5h0m10 2.5h0m10 2.5h0m10.5 2h0m10 1h0m10.5 .5h0m10 0h0m10-.5h0m10-1.5h0m9.5-2h0m9-2.5h0m9-3h0m9-3.5h0m8-4.5h0m7.5-4.5h0m7.5-5h0m6.5-5.5h0m6-6h0m5.5-6.5h0m5-6.5h0m4-7h0m4-7.5h0m3-7.5h0m2.5-7.5h0m1.5-7.5h0m1.5-8h0m.5-8h0m0-8h0m-1-8h0m-1-8h0m-2-8h0m-2-7.5h0m-3-8h0m-3.5-7.5h0m-4-7h0m-4-7h0m-5-7h0m-5-7h0m-5.5-6h0m-6-6.5h0m-6-5.5h0m-7-5.5h0m-6.5-5.5h0m-7-5h0m-7.5-4.5h0m-7.5-4h0m-7.5-4h0m-8-3.5h0m-8-3h0m-8-2.5h0m-8-2.5h0m-8.5-2h0m-8-1.5h0m-8.5-1h0m-8.5-1h0m-8 0h0m-8 0h0m-8 .5h0m-8 .5h0m-8 1.5h0m-8 1.5h0m-7.5 2h0m-7 2.5h0m-7.5 3h0m-6.5 3h0m-7 3.5h0m-6 4h0m-6 4h0m-6 5h0m-5.5 5h0m-5 5h0m-4.5 5.5h0m-4 6h0m-4 6.5h0m-3 6.5h0m-3 6.5h0m-2.5 7h0m-1.5 7h0m-1.5 7.5h0m-.5 7.5h0m-.5 8h0m.5 7.5h0m1 8h0m1.5 8h0m2 8h0m3 8h0m2-5.5h0m3 7.5h0m3.5 8h0m4 7.5h0m4.5 7.5h0m5 7h0m6 7.5h0m6 6.5h0m7 6.5h0m7.5 6.5h0m7.5 6h0m8 5.5h0m8.5 5h0m9 5h0m9 4h0m9.5 3.5h0m9.5 3.5h0m10 2.5h0m10 2h0m10 1.5h0m10 1h0m10 0h0m9.5 0h0m10-1h0m9-1.5h0m9.5-2h0m9-3h0m8.5-3h0m8-4h0m8-4h0m7-4.5h0m7-5.5h0m6-5.5h0m6-6h0m5-6h0m4.5-7h0m4-6.5h0m3.5-7h0m2.5-7.5h0m2.5-7.5h0m1.5-7.5h0m.5-8h0m.5-7.5h0m0-8h0m-1-7.5h0m-1.5-8h0m-2-7.5h0m-2.5-7.5h0m-3-7.5h0m-3.5-7h0m-4-7.5h0m-4-6.5h0m-5-7h0m-5-6h0m-5.5-6.5h0m-6-6h0m-6-5.5h0m-6.5-5h0m-7-5h0m-7-4.5h0m-7-4.5h0m-7.5-4h0m-7.5-3.5h0m-8-3.5h0m-7.5-2.5h0m-8-2.5h0m-8-2.5h0m-8-1.5h0m-8-1.5h0m-8.5-1h0m-8-.5h0m-8 0h0m-8 0h0m-7.5 .5h0m-8 1h0m-7.5 1.5h0m-7.5 2h0m-7.5 2h0m-7 2.5h0m-7 3h0m-6.5 3h0m-6 3.5h0m-6.5 4h0m-5.5 4.5h0m-5.5 4.5h0m-5 5h0m-5 5.5h0m-4 5.5h0m-4 6h0m-3.5 6h0m-3 6.5h0m-2.5 7h0m-2 6.5h0m-1.5 7h0m-1 7.5h0m-.5 7.5h0m0 7.5h0m.5 7.5h0m1 8h0m2 7.5h0m2.5-5h0m2 7.5h0m2.5 7.5h0m3 7.5h0m3.5 7.5h0m4.5 7.5h0m4.5 7h0m5.5 7h0m6 7h0m6 6.5h0m7 6.5h0m7 6h0m8 5.5h0m8 5h0m8.5 5h0m8.5 4h0m9 4h0m9.5 3.5h0m9.5 3h0m9.5 2h0m9.5 2h0m10 1h0m9.5 .5h0m9.5 0h0m9.5-.5h0m9.5-1h0m9-1.5h0m9-2.5h0m8.5-2.5h0m8-3.5h0m8-4h0m7-4h0m7-5h0m6.5-5h0m6-5.5h0m5-6h0m5-6h0m4-6.5h0m4-7h0m3-7h0m2.5-7h0m1.5-7.5h0m1.5-7.5h0m.5-7.5h0m0-7.5h0m-.5-7.5h0m-1-7.5h0m-1.5-7.5h0m-2-7.5h0m-2.5-7.5h0m-3-7h0m-3.5-7h0m-4-7h0m-4.5-6.5h0m-5-6.5h0m-5-6h0m-5.5-6h0m-6-5.5h0m-6-5.5h0m-6.5-5h0m-6.5-4.5h0m-7-4.5h0m-7-4h0m-7.5-4h0m-7.5-3h0m-7.5-3h0m-7.5-3h0m-8-2h0m-8-2h0m-7.5-1.5h0m-8-1.5h0m-8-.5h0m-8-.5h0m-7.5 0h0m-8 .5h0m-7.5 .5h0m-7.5 1h0m-7.5 1.5h0m-7 2h0m-7 2.5h0m-7 2.5h0m-6.5 3h0m-6.5 3h0m-6 4h0m-6 4h0m-5.5 4.5h0m-5 4.5h0m-5 5h0m-4 5.5h0m-4 5.5h0m-4 6h0m-3 6h0m-3 6.5h0m-2 6.5h0m-2 6.5h0m-1 7h0m-1 7.5h0m0 7h0m0 7.5h0m1 7.5h0m3-4.5h0m1 7h0m1.5 7.5h0m2.5 7.5h0m2.5 7.5h0m3.5 7h0m3.5 7h0m4.5 7.5h0m5 7h0m5 6.5h0m6 6.5h0m6.5 6.5h0m7 5.5h0m7 6h0m7.5 5h0m8 5h0m8.5 4.5h0m8.5 4h0m9 3.5h0m9 3h0m9.5 2.5h0m9 2h0m9.5 1.5h0m9.5 1h0m9.5 .5h0m9 0h0m9.5-1h0m8.5-1.5h0m9-1.5h0m8.5-2.5h0m8-3h0m8-3.5h0m7.5-3.5h0m7-4.5h0m6.5-5h0m6-5h0m5.5-5.5h0m5-6h0m4.5-6h0m3.5-6.5h0m3.5-6.5h0m3-7h0m2-7h0m1.5-7h0m1-7.5h0m.5-7.5h0m0-7h0m-1-7.5h0m-1-7.5h0m-1.5-7h0m-2.5-7.5h0m-2.5-7h0m-3.5-7h0m-3.5-6.5h0m-4-6.5h0m-4.5-6.5h0m-4.5-6h0m-5.5-6h0m-5.5-6h0m-5.5-5h0m-6.5-5.5h0m-6-4.5h0m-7-4.5h0m-6.5-4.5h0m-7-3.5h0m-7.5-3.5h0m-7-3.5h0m-7.5-2.5h0m-7.5-2.5h0m-7.5-2h0m-8-2h0m-7.5-1h0m-8-1h0m-7.5-1h0m-7.5 0h0m-7.5 0h0m-8 .5h0m-7 1h0m-7.5 1h0m-7 2h0m-7 2h0m-7 2h0m-6.5 3h0m-6.5 3h0m-6 3.5h0m-5.5 3.5h0m-5.5 4h0m-5.5 4.5h0m-5 4.5h0m-4.5 5h0m-4 5.5h0m-4 5.5h0m-3 6h0m-3 6h0m-2.5 6.5h0m-2 6.5h0m-1.5 6.5h0m-1 7h0m-.5 7h0m0 7h0m3.5-4h0m0 7h0m1 7h0m1 7.5h0m2 7h0m2 7h0m3 7h0m3.5 7.5h0m4 6.5h0m4.5 7h0m5 6.5h0m5.5 6.5h0m6 6.5h0m6 6h0m7 5.5h0m7 5.5h0m7.5 5h0m8 4.5h0m8.5 4h0m8.5 4h0m8.5 3h0m9 3h0m9 2h0m9 2h0m9 1h0m9.5 .5h0m9 .5h0m9-.5h0m9-1h0m8.5-1.5h0m8.5-2h0m8-2.5h0m7.5-3h0m7.5-3.5h0m7-4h0m7-4.5h0m6-4.5h0m5.5-5.5h0m5.5-5.5h0m4.5-5.5h0m4-6h0m3.5-6.5h0m3-6.5h0m2.5-7h0m2-7h0m1.5-7h0m.5-7h0m.5-7h0m-.5-7h0m-.5-7.5h0m-1.5-7h0m-2-7h0m-2.5-7h0m-2.5-7h0m-3.5-6.5h0m-3.5-6.5h0m-4-6.5h0m-4.5-6h0m-5-6h0m-5-5.5h0m-5.5-5.5h0m-6-5h0m-6-5h0m-6-4.5h0m-6.5-4.5h0m-7-4h0m-7-3.5h0m-7-3.5h0m-7-3h0m-7.5-2.5h0m-7.5-2h0m-7.5-2h0m-7.5-1.5h0m-7.5-1.5h0m-7.5-.5h0m-7.5-.5h0m-7.5 0h0m-7 0h0m-7.5 1h0m-7 1h0m-7 1h0m-7 2h0m-7 2h0m-6.5 2.5h0m-6.5 2.5h0m-6 3.5h0m-5.5 3.5h0m-6 3.5h0m-5 4h0m-5 4.5h0m-4.5 5h0m-4.5 5h0m-3.5 5h0m-3.5 5.5h0m-3.5 6h0m-2.5 6h0m-2 6.5h0m-2 6h0m-1 7h0m-1 6.5h0m3.5-3.5h0m-.5 6.5h0m0 7h0m.5 7h0m1 6.5h0m1.5 7h0m2 7h0m2.5 7h0m3 7h0m3.5 7h0m4 6.5h0m5 6.5h0m5 6.5h0m5.5 6.5h0m6 5.5h0m6 6h0m7 5h0m7 5.5h0m7.5 4.5h0m8 4h0m8 4h0m8.5 3.5h0m8.5 3h0m8.5 2.5h0m9 2h0m9 1.5h0m8.5 1h0m9 .5h0m9-.5h0m8.5-.5h0m8.5-1h0m8.5-1.5h0m8-2.5h0m7.5-2.5h0m7.5-3h0m7-3.5h0m7-4h0m6-4.5h0m6-5h0m5.5-5h0m4.5-5.5h0m4.5-5.5h0m4-6.5h0m3-6h0m3-6.5h0m2-6.5h0m1.5-7h0m1.5-6.5h0m.5-7h0m0-7h0m-.5-7h0m-1-7h0m-1.5-7h0m-2-7h0m-2.5-6.5h0m-3-6.5h0m-3.5-6.5h0m-3.5-6.5h0m-4-6h0m-4.5-6h0m-5-5.5h0m-5-5.5h0m-5.5-5.5h0m-6-4.5h0m-6-5h0m-6-4h0m-6.5-4h0m-6.5-4h0m-7-3.5h0m-7-3h0m-7-2.5h0m-7-2.5h0m-7.5-2h0m-7-2h0m-7.5-1.5h0m-7.5-1h0m-7.5-.5h0m-7 0h0m-7.5 0h0m-7 0h0m-7 1h0m-7 1h0m-7 1.5h0m-6.5 2h0m-6.5 2h0m-6.5 2.5h0m-6 3h0m-6 3h0m-5.5 3.5h0m-5 4h0m-5 4h0m-5 4.5h0m-4.5 5h0m-4 5h0m-3.5 5h0m-3 5.5h0m-3 6h0m-2.5 6h0m-1.5 6h0m-1.5 6.5h0m3.5-3h0m-1 6h0m-1 6.5h0m0 6.5h0m0 6.5h0m.5 7h0m1.5 6.5h0m1.5 7h0m2 7h0m3 6.5h0m3 6.5h0m3.5 7h0m4.5 6.5h0m4.5 6h0m5 6.5h0m5.5 5.5h0m6 6h0m6.5 5h0m7 5.5h0m7 4.5h0m7.5 4.5h0m7.5 4h0m8 3.5h0m8.5 3h0m8 3h0m8.5 2h0m8.5 2h0m9 1h0m8.5 .5h0m8.5 .5h0m8.5-.5h0m8.5-.5h0m8-1.5h0m8-1.5h0m8-2.5h0m7.5-3h0m7-3h0m6.5-3.5h0m6.5-4h0m6-4.5h0m5.5-5h0m5-5h0m4.5-5.5h0m4-5.5h0m3.5-6h0m3-6.5h0m2.5-6h0m2-6.5h0m1.5-6.5h0m.5-7h0m.5-6.5h0m0-7h0m-1-7h0m-1-6.5h0m-1.5-6.5h0m-2-7h0m-2.5-6.5h0m-3-6.5h0m-3.5-6h0m-4-6h0m-4-6h0m-4.5-5.5h0m-5-5.5h0m-5-5.5h0m-5.5-5h0m-5.5-4.5h0m-6-4.5h0m-6.5-4h0m-6-4h0m-6.5-3.5h0m-7-3h0m-7-3h0m-6.5-2.5h0m-7.5-2.5h0m-7-1.5h0m-7-1.5h0m-7-1.5h0m-7.5-1h0m-7-.5h0m-7 0h0m-7 .5h0m-7 .5h0m-7 .5h0m-7 1.5h0m-6.5 1.5h0m-6.5 2h0m-6 2.5h0m-6 2.5h0m-6 3h0m-5.5 3h0m-5.5 3.5h0m-5 4h0m-5 4h0m-4 4.5h0m-4.5 5h0m-3.5 5h0m-3.5 5h0m-3 5.5h0m-2.5 6h0m-2 6h0m4-3h0m-2 6h0m-1.5 6h0m-1 6h0m-.5 6.5h0m0 6.5h0m.5 6.5h0m1 6.5h0m1 6.5h0m2 6.5h0m2.5 7h0m2.5 6.5h0m3.5 6.5h0m3.5 6h0m4.5 6.5h0m4.5 6h0m5.5 6h0m5.5 5.5h0m6 5.5h0m6.5 5h0m6.5 5h0m7 4.5h0m7.5 4h0m7.5 3.5h0m8 3.5h0m8 2.5h0m8 2.5h0m8.5 2h0m8.5 1.5h0m8 1h0m8.5 .5h0m8.5 0h0m8-.5h0m8-1h0m8-1.5h0m8-2h0m7-2h0m7.5-3h0m6.5-3.5h0m6.5-3.5h0m6-4h0m5.5-4.5h0m5-5h0m5-5h0m4-5.5h0m4-5.5h0m3-6h0m3-6h0m2-6h0m1.5-6.5h0m1.5-6.5h0m.5-6.5h0m0-6.5h0m0-6.5h0m-1-7h0m-1.5-6.5h0m-1.5-6.5h0m-2-6.5h0m-3-6h0m-3-6.5h0m-3.5-6h0m-3.5-5.5h0m-4.5-6h0m-4.5-5.5h0m-5-5h0m-5-5h0m-5.5-5h0m-5.5-4.5h0m-6-4h0m-6-4h0m-6-3.5h0m-6.5-3.5h0m-7-3h0m-6.5-2.5h0m-7-2.5h0m-6.5-2h0m-7-1.5h0m-7-1.5h0m-7-1h0m-7-1h0m-7 0h0m-7 0h0m-7 0h0m-6.5 1h0m-7 1h0m-6.5 1.5h0m-6.5 1.5h0m-6 2h0m-6 2.5h0m-6 2.5h0m-5.5 3h0m-5.5 3.5h0m-5 3.5h0m-5 4h0m-4.5 4h0m-4 4.5h0m-4 5h0m-3.5 5h0m-3 5h0m-2.5 5.5h0m4-2h0m-2.5 5h0m-2 6h0m-1.5 5.5h0m-1.5 6h0m-.5 6h0m-.5 6h0m0 6.5h0m1 6.5h0m1 6.5h0m1.5 6.5h0m2 6h0m2.5 6.5h0m3 6.5h0m3 6h0m4 6.5h0m4.5 6h0m5 5.5h0m5 6h0m5.5 5h0m6 5.5h0m6.5 4.5h0m6.5 4.5h0m7 4.5h0m7.5 3.5h0m7.5 3.5h0m7.5 3h0m8 3h0m8 2h0m8 1.5h0m8 1.5h0m8.5 .5h0m8 .5h0m8 0h0m8-1h0m8-1h0m7.5-1.5h0m7-2h0m7.5-2.5h0m6.5-3h0m6.5-3.5h0m6-3.5h0m6-4.5h0m5-4.5h0m5-4.5h0m4.5-5h0m3.5-5.5h0m3.5-5.5h0m3-6h0m2.5-6h0m2-6h0m1.5-6h0m1-6.5h0m.5-6.5h0m0-6.5h0m-.5-6.5h0m-1-6h0m-1.5-6.5h0m-2-6.5h0m-2-6h0m-3-6h0m-3-6h0m-3.5-6h0m-4-5.5h0m-4-5.5h0m-4.5-5.5h0m-5-5h0m-5-4.5h0m-5.5-4.5h0m-5.5-4.5h0m-6-4h0m-6-3.5h0m-6-3.5h0m-6.5-3h0m-6.5-3h0m-6.5-2.5h0m-6.5-2h0m-7-2h0m-7-1.5h0m-6.5-1.5h0m-7-.5h0m-7-.5h0m-6.5-.5h0m-7 0h0m-6.5 .5h0m-6.5 1h0m-6.5 1h0m-6.5 1.5h0m-6 2h0m-6 2h0m-6 2.5h0m-5.5 2.5h0m-5.5 3h0m-5 3.5h0m-5 3.5h0m-4.5 4h0m-4 4.5h0m-4 4.5h0m-3.5 4.5h0m-3.5 5h0m4.5-1.5h0m-3 5h0m-2.5 5h0m-2.5 5.5h0m-2 5.5h0m-1 5.5h0m-1 6h0m-1 6h0m0 6h0m.5 6h0m.5 6.5h0m1.5 6h0m1.5 6.5h0m2 6h0m3 6.5h0m3 6h0m3.5 6h0m4 6h0m4.5 5.5h0m4.5 6h0m5.5 5h0m5.5 5.5h0m6 4.5h0m6.5 4.5h0m6.5 4.5h0m7 4h0m7 3.5h0m7.5 3h0m7.5 3h0m8 2.5h0m7.5 1.5h0m8 1.5h0m8 1h0m8 .5h0m7.5 .5h0m8-.5h0m7.5-1h0m7.5-1h0m7.5-2h0m7-2h0m6.5-2.5h0m6.5-3h0m6.5-3.5h0m5.5-4h0m5.5-4h0m5-4.5h0m4.5-4.5h0m4-5.5h0m3.5-5h0m3.5-5.5h0m2.5-5.5h0m2.5-6h0m1.5-6h0m1.5-6h0m.5-6.5h0m.5-6h0m-.5-6.5h0m-.5-6h0m-1-6.5h0m-1.5-6h0m-2-6h0m-2.5-6h0m-3-6h0m-3-6h0m-3.5-5.5h0m-4-5.5h0m-4.5-5h0m-4.5-5h0m-4.5-5h0m-5-4.5h0m-5.5-4.5h0m-5.5-4h0m-6-4h0m-6-3.5h0m-6-3h0m-6-3h0m-6.5-2.5h0m-6.5-2.5h0m-6.5-2h0m-6.5-1.5h0m-7-1.5h0m-6.5-1h0m-6.5-1h0m-7 0h0m-6.5 0h0m-6.5 0h0m-6.5 .5h0m-6.5 1h0m-6 1.5h0m-6.5 1.5h0m-5.5 1.5h0m-6 2.5h0m-5.5 2.5h0m-5.5 3h0m-5 3h0m-5 3.5h0m-4.5 3.5h0m-4.5 4h0m-4 4h0m-3.5 4.5h0m4.5-1h0m-3.5 4.5h0m-3.5 4.5h0m-2.5 5h0m-2.5 5h0m-2 5.5h0m-1.5 5.5h0m-1.5 5.5h0m-.5 5.5h0m-.5 6h0m0 6h0m.5 6h0m1 6h0m1.5 6h0m2 6.5h0m2 6h0m3 6h0m3 6h0m3.5 5.5h0m4 6h0m4.5 5.5h0m5 5h0m5.5 5.5h0m5.5 5h0m6 4.5h0m6 4h0m7 4h0m6.5 4h0m7 3h0m7.5 3h0m7.5 2.5h0m7.5 2h0m7.5 2h0m7.5 1h0m8 1h0m7.5 .5h0m8-.5h0m7.5-.5h0m7-1h0m7.5-1h0m7-2h0m6.5-2.5h0m6.5-2.5h0m6-3h0m6-3.5h0m5.5-4h0m5-4h0m5-4.5h0m4-4.5h0m4-5h0m3-5.5h0m3-5.5h0m2.5-5.5h0m2-5.5h0m1.5-6h0m1-6h0m.5-6h0m0-6h0m0-6.5h0m-1-6h0m-1-6h0m-2-6h0m-2-6h0m-2.5-5.5h0m-3-6h0m-3-5.5h0m-3.5-5.5h0m-4-5h0m-4.5-5h0m-4.5-5h0m-4.5-4.5h0m-5-4.5h0m-5.5-4h0m-5.5-4h0m-5.5-3.5h0m-6-3.5h0m-6-3h0m-6-2.5h0m-6.5-2.5h0m-6.5-2.5h0m-6-1.5h0m-6.5-1.5h0m-6.5-1.5h0m-7-1h0m-6.5-.5h0m-6.5 0h0m-6 0h0m-6.5 .5h0m-6.5 .5h0m-6 1h0m-6 1.5h0m-6 1.5h0m-6 2h0m-5.5 2.5h0m-5 2.5h0m-5.5 3h0m-4.5 3h0m-5 3.5h0m-4.5 3.5h0m-4 4h0m4.5-1h0m-3.5 4h0m-4 4.5h0m-3 4.5h0m-3 4.5h0m-2.5 5h0m-2 5h0m-2 5h0m-1.5 5.5h0m-1 5.5h0m-.5 6h0m0 5.5h0m0 6h0m.5 6h0m1.5 5.5h0m1.5 6h0m2 6h0m2.5 6h0m2.5 6h0m3.5 5.5h0m3.5 5.5h0m4.5 5.5h0m4.5 5.5h0m5 5h0m5 5h0m5.5 4.5h0m6 4.5h0m6.5 4h0m6.5 4h0m6.5 3h0m7 3.5h0m7 2.5h0m7.5 2.5h0m7.5 1.5h0m7.5 1.5h0m7.5 1h0m7.5 1h0m7 0h0m7.5-.5h0m7.5-.5h0m7-1h0m7-1.5h0m6.5-2h0m6.5-2.5h0m6.5-3h0m5.5-3h0m5.5-3.5h0m5.5-4h0m4.5-4h0m4.5-4.5h0m4-4.5h0m3.5-5h0m3-5h0m3-5.5h0m2-5.5h0m2-5.5h0m1-6h0m1-6h0m0-5.5h0m0-6h0m-.5-6h0m-1-6h0m-1-6h0m-2-6h0m-2-5.5h0m-2.5-5.5h0m-3-5.5h0m-3.5-5.5h0m-3.5-5h0m-4-5h0m-4-5h0m-4.5-4.5h0m-5-4.5h0m-5-4.5h0m-5.5-3.5h0m-5-4h0m-6-3.5h0m-5.5-3h0m-6-3h0m-6-2.5h0m-6-2h0m-6.5-2h0m-6.5-2h0m-6-1h0m-6.5-1h0m-6.5-1h0m-6-.5h0m-6.5 0h0m-6.5 0h0m-6 .5h0m-6 1h0m-6 1h0m-6 1.5h0m-5.5 2h0m-5.5 2h0m-5.5 2h0m-5 3h0m-5 3h0m-5 3h0m-4 3.5h0m4.5-.5h0m-4.5 3.5h0m-4 3.5h0m-3.5 4h0m-3.5 4.5h0m-3 4.5h0m-2.5 4.5h0m-2.5 5h0m-2 5h0m-1.5 5h0m-1 5.5h0m-1 5.5h0m-.5 5.5h0m0 5.5h0m.5 5.5h0m1 6h0m1 6h0m2 5.5h0m2 6h0m2.5 5.5h0m3 5.5h0m3.5 5.5h0m4 5.5h0m4 5.5h0m4.5 5h0m5 5h0m5 4.5h0m6 4.5h0m5.5 4h0m6.5 4h0m6.5 3.5h0m6.5 3h0m7 3h0m7 2.5h0m7 2h0m7 1.5h0m7.5 1.5h0m7 .5h0m7.5 .5h0m7 0h0m7.5-.5h0m7-1h0m6.5-1h0m7-1.5h0m6-2.5h0m6.5-2h0m6-3h0m5.5-3.5h0m5-3.5h0m5-3.5h0m4.5-4.5h0m4-4h0m4-5h0m3-5h0m3-5h0m2.5-5h0m2-5.5h0m1.5-5.5h0m1-5.5h0m.5-6h0m.5-5.5h0m-.5-6h0m-.5-6h0m-1-5.5h0m-1.5-5.5h0m-2-6h0m-2.5-5.5h0m-2.5-5.5h0m-3-5h0m-3-5.5h0m-4-5h0m-4-4.5h0m-4-5h0m-4.5-4.5h0m-5-4h0m-5-4h0m-5-3.5h0m-5.5-3.5h0m-5.5-3.5h0m-5.5-3h0m-6-2.5h0m-6-2.5h0m-6-2h0m-6-2h0m-6-1.5h0m-6.5-1h0m-6-1h0m-6.5-.5h0m-6-.5h0m-6 0h0m-6.5 .5h0m-6 .5h0m-5.5 1h0m-6 1h0m-5.5 1.5h0m-5.5 2h0m-5.5 2h0m-5 2.5h0m-5 3h0m-5 2.5h0m4.5 0h0m-4.5 3h0m-4 3.5h0m-4 3.5h0m-4 3.5h0m-3 4h0m-3.5 4.5h0m-2.5 4.5h0m-2.5 4.5h0m-2 4.5h0m-2 5h0m-1.5 5.5h0m-1 5h0m-.5 5.5h0m0 5.5h0m0 5.5h0m.5 5.5h0m1 5.5h0m1.5 5.5h0m2 6h0m2 5.5h0m3 5.5h0m3 5.5h0m3.5 5h0m3.5 5.5h0m4.5 5h0m4.5 5h0m5 4.5h0m5.5 4.5h0m5.5 4h0m5.5 4h0m6.5 3.5h0m6 3.5h0m6.5 3h0m7 2.5h0m7 2h0m6.5 2h0m7.5 1.5h0m7 1h0m7 .5h0m7 .5h0m7-.5h0m7-.5h0m6.5-1h0m6.5-1.5h0m6.5-1.5h0m6-2.5h0m6-2.5h0m5.5-2.5h0m5.5-3.5h0m5-3.5h0m4.5-4h0m4.5-4h0m3.5-4.5h0m3.5-4.5h0m3-5h0m3-5h0m2-5h0m2-5.5h0m1-5.5h0m1-5.5h0m.5-5.5h0m0-5.5h0m-.5-5.5h0m-.5-6h0m-1.5-5.5h0m-1.5-5.5h0m-2-5.5h0m-2.5-5.5h0m-2.5-5h0m-3-5h0m-3.5-5h0m-3.5-5h0m-4-4.5h0m-4.5-4.5h0m-4.5-4.5h0m-4.5-4h0m-5-3.5h0m-5-3.5h0m-5.5-3.5h0m-5.5-3h0m-5.5-3h0m-5.5-2.5h0m-6-2h0m-6-2h0m-6-1.5h0m-6-1.5h0m-6-1h0m-6-1h0m-6-.5h0m-6 0h0m-6 0h0m-6 .5h0m-6 1h0m-5.5 1h0m-6 1h0m-5 2h0m-5.5 1.5h0m-5 2.5h0m-5 2.5h0m4 0h0m-4.5 2.5h0m-4.5 3h0m-4.5 3h0m-4 3h0m-3.5 4h0m-3.5 3.5h0m-3.5 4h0m-3 4h0m-2.5 4.5h0m-2 4.5h0m-2 5h0m-1.5 5h0m-1.5 5h0m-.5 5h0m-.5 5.5h0m0 5h0m.5 5.5h0m.5 5.5h0m1 5.5h0m2 5.5h0m2 5.5h0m2 5.5h0m3 5.5h0m3 5h0m3.5 5h0m4 5h0m4.5 5h0m4.5 4.5h0m5 4.5h0m5 4.5h0m5.5 3.5h0m6 4h0m6 3.5h0m6.5 3h0m6.5 2.5h0m6.5 2.5h0m6.5 2h0m7 1.5h0m6.5 1.5h0m7 .5h0m7 .5h0m7 0h0m6.5 0h0m6.5-1h0m6.5-1h0m6.5-1.5h0m6-2h0m6-2h0m5.5-3h0m5.5-2.5h0m5-3.5h0m5-3.5h0m4-4h0m4-4h0m3.5-4.5h0m3.5-4.5h0m2.5-5h0m2.5-4.5h0m2-5.5h0m1.5-5h0m1.5-5.5h0m.5-5.5h0m.5-5h0m-.5-5.5h0m-.5-5.5h0m-1-5.5h0m-1-5.5h0m-2-5.5h0m-2-5.5h0m-2.5-5h0m-2.5-5h0m-3-5h0m-3.5-5h0m-3.5-4.5h0m-4-4.5h0m-4.5-4h0m-4.5-4h0m-4.5-4h0m-5-3.5h0m-5-3.5h0m-5.5-3h0m-5-3h0m-5.5-2.5h0m-6-2.5h0m-5.5-2h0m-6-2h0m-6-1.5h0m-5.5-1h0m-6-1h0m-6-.5h0m-6-.5h0m-6 0h0m-5.5 0h0m-6 1h0m-5.5 .5h0m-5.5 1h0m-5.5 1.5h0m-5 2h0m-5.5 2h0m4.5 .5h0m-5 2h0m-5 2.5h0m-4.5 2.5h0m-4 2.5h0m-4 3h0m-4 3.5h0m-3.5 3.5h0m-3.5 4h0m-3 4h0m-2.5 4h0m-2.5 4.5h0m-2 4.5h0m-2 4.5h0m-1 5h0m-1 5h0m-1 5h0m0 5h0m0 5.5h0m.5 5h0m1 5.5h0m1.5 5.5h0m1.5 5h0m2 5.5h0m2.5 5.5h0m3 5h0m3 5h0m4 5h0m4 5h0m4 4.5h0m5 4.5h0m4.5 4h0m5.5 4h0m5.5 4h0m5.5 3h0m6 3.5h0m6.5 2.5h0m6 2.5h0m6.5 2.5h0m6.5 1.5h0m7 1.5h0m6.5 1h0m7 1h0m6.5 0h0m6.5 0h0m6.5-.5h0m6.5-1h0m6-1h0m6.5-1.5h0m5.5-2h0m6-2.5h0m5-2.5h0m5.5-3h0m4.5-3.5h0m4.5-3.5h0m4-4h0m4-4h0m3-4.5h0m3-4.5h0m2.5-4.5h0m2.5-5h0m1.5-5h0m1.5-5h0m1-5.5h0m.5-5h0m0-5.5h0m0-5.5h0m-1-5h0m-1-5.5h0m-1.5-5h0m-1.5-5.5h0m-2-5h0m-2.5-5h0m-3-5h0m-3-4.5h0m-3.5-5h0m-4-4.5h0m-3.5-4h0m-4.5-4h0m-4.5-4h0m-4.5-3.5h0m-5-3.5h0m-5-3.5h0m-5-3h0m-5.5-2.5h0m-5.5-2.5h0m-5.5-2h0m-5.5-2h0m-5.5-1.5h0m-6-1.5h0m-5.5-1h0m-6-1h0m-6-.5h0m-5.5 0h0m-6 0h0m-5.5 .5h0m-5.5 .5h0m-5.5 1h0m-5.5 1h0m-5 1.5h0m4 1h0m-5 1.5h0m-5 2h0m-4.5 2h0m-4.5 2.5h0m-4.5 2.5h0m-4 3h0m-4 3h0m-3.5 3.5h0m-3.5 3.5h0m-3 3.5h0m-3 4h0m-2.5 4h0m-2 4.5h0m-2 4.5h0m-1.5 4.5h0m-1 5h0m-1 5h0m-.5 5h0m0 5h0m.5 5h0m.5 5h0m1 5.5h0m1.5 5h0m2 5.5h0m2 5h0m2.5 5h0m3 5h0m3.5 5h0m3.5 4.5h0m4 5h0m4.5 4h0m4.5 4.5h0m5 4h0m5 3.5h0m5.5 3.5h0m6 3.5h0m5.5 3h0m6 2.5h0m6.5 2.5h0m6.5 1.5h0m6 2h0m6.5 1h0m6.5 1h0m6.5 .5h0m6.5 0h0m6.5 0h0m6.5-1h0m6-1h0m6-1h0m6-2h0m5.5-2h0m5.5-2.5h0m5-2.5h0m5-3h0m4.5-3.5h0m4-3.5h0m4-4h0m3.5-4h0m3-4h0m3-4.5h0m2-5h0m2-4.5h0m1.5-5h0m1.5-5h0m.5-5h0m.5-5.5h0m0-5h0m-.5-5h0m-.5-5.5h0m-1.5-5h0m-1.5-5h0m-2-5h0m-2-5h0m-2.5-5h0m-3-5h0m-3-4.5h0m-3.5-4.5h0m-3.5-4h0m-4-4h0m-4.5-4h0m-4.5-4h0m-4.5-3.5h0m-4.5-3h0m-5-3h0m-5.5-3h0m-5-2.5h0m-5.5-2h0m-5.5-2h0m-5.5-2h0m-5.5-1.5h0m-5.5-1h0m-5.5-1h0m-6-1h0m-5.5 0h0m-5.5 0h0m-5.5 0h0m-5.5 .5h0m-5.5 .5h0m-5.5 1h0m4 1.5h0m-5 1h0m-5 1.5h0m-5 1.5h0m-4.5 2h0m-4.5 2h0m-4.5 2.5h0m-4 2.5h0m-4 3h0m-3.5 3h0m-3.5 3.5h0m-3.5 3.5h0m-2.5 4h0m-3 3.5h0m-2 4.5h0m-2 4h0m-2 4.5h0m-1 4.5h0m-1 5h0m-1 4.5h0m0 5h0m0 5h0m.5 5h0m1 5h0m1 5h0m1.5 5.5h0m2 5h0m2.5 5h0m2.5 4.5h0m3 5h0m3.5 4.5h0m3.5 5h0m4 4h0m4.5 4.5h0m4.5 4h0m5 3.5h0m5 4h0m5.5 3h0m5.5 3h0m6 3h0m6 2.5h0m6 2h0m6.5 1.5h0m6 1.5h0m6.5 1h0m6 1h0m6.5 0h0m6.5 0h0m6-.5h0m6-.5h0m6-1h0m6-1.5h0m5.5-2h0m5.5-2h0m5-2.5h0m5-3h0m4.5-3h0m4-3h0m4-3.5h0m3.5-4h0m3.5-4h0m3-4.5h0m2.5-4.5h0m2-4.5h0m2-4.5h0m1-5h0m1-5h0m1-5h0m0-5h0m0-5h0m-.5-5h0m-1-5h0m-1.5-5h0m-1.5-5h0m-2-5h0m-2-4.5h0m-3-5h0m-2.5-4.5h0m-3.5-4.5h0m-3.5-4h0m-3.5-4.5h0m-4-3.5h0m-4-4h0m-4.5-3.5h0m-4.5-3.5h0m-5-3h0m-5-2.5h0m-5-3h0m-5-2.5h0m-5.5-2h0m-5-2h0m-5.5-1.5h0m-5.5-1h0m-5.5-1.5h0m-5.5-.5h0m-5.5-.5h0m-5.5-.5h0m-5.5 0h0m-5.5 .5h0m-5 .5h0m3.5 1.5h0m-5 .5h0m-5 1h0m-5 1h0m-5 1.5h0m-4.5 2h0m-4.5 2h0m-4.5 2h0m-4 2.5h0m-4 2.5h0m-4 3h0m-3.5 3.5h0m-3 3h0m-3 3.5h0m-3 4h0m-2 4h0m-2.5 4h0m-1.5 4h0m-1.5 4.5h0m-1.5 4.5h0m-.5 4.5h0m-.5 5h0m0 4.5h0m0 5h0m.5 5h0m1 5h0m1.5 5h0m1.5 5h0m2 4.5h0m2.5 5h0m3 5h0m3 4.5h0m3.5 4.5h0m3.5 4.5h0m4 4h0m4.5 4h0m4.5 4h0m5 3.5h0m5 3.5h0m5.5 3h0m5.5 2.5h0m6 3h0m5.5 2h0m6 2h0m6 1.5h0m6.5 1h0m6 1h0m6 .5h0m6 .5h0m6.5-.5h0m6-.5h0m5.5-1h0m6-1h0m5.5-1.5h0m5.5-2h0m5-2h0m5-2.5h0m4.5-3h0m4.5-3h0m4-3.5h0m3.5-3.5h0m3.5-4h0m3-4h0m2.5-4h0m2.5-4.5h0m2-4.5h0m1.5-4.5h0m1-4.5h0m1-5h0m.5-5h0m0-5h0m-.5-5h0m-.5-4.5h0m-1-5h0m-1.5-5h0m-1.5-5h0m-2-4.5h0m-2.5-4.5h0m-2.5-4.5h0m-3-4.5h0m-3-4.5h0m-3.5-4h0m-4-4h0m-4-3.5h0m-4-3.5h0m-4.5-3.5h0m-4.5-3h0m-4.5-3h0m-5-3h0m-5-2.5h0m-5-2h0m-5-2h0m-5.5-2h0m-5-1h0m-5.5-1.5h0m-5.5-1h0m-5-.5h0m-5.5-.5h0m-5.5 0h0m-5 0h0m3 1.5h0m-5 .5h0m-5 .5h0m-5 .5h0m-5 1h0m-4.5 1.5h0m-5 1.5h0m-4.5 1.5h0m-4 2h0m-4.5 2.5h0m-4 2.5h0m-3.5 2.5h0m-3.5 3h0m-3.5 3.5h0m-3 3h0m-3 3.5h0m-2.5 4h0m-2 4h0m-2 4h0m-1.5 4h0m-1.5 4.5h0m-1 4.5h0m-.5 4.5h0m-.5 4.5h0m0 5h0m.5 4.5h0m1 5h0m1 4.5h0m1.5 5h0m1.5 4.5h0m2 5h0m2.5 4.5h0m3 4.5h0m3 4.5h0m3.5 4.5h0m4 4h0m4 4.5h0m4.5 3.5h0m4.5 3.5h0m5 3.5h0m5 3.5h0m5.5 2.5h0m5 3h0m6 2h0m5.5 2h0m6 2h0m6 1.5h0m6 1h0m6 .5h0m6 .5h0m6 0h0m5.5-.5h0m6-.5h0m5.5-1h0m5.5-1.5h0m5.5-1.5h0m5-2h0m5-2h0m4.5-2.5h0m4.5-3h0m4-3h0m4-3.5h0m3.5-3.5h0m3-4h0m3-4h0m2.5-4h0m2-4.5h0m1.5-4h0m1.5-5h0m1-4.5h0m1-4.5h0m0-5h0m0-4.5h0m-.5-5h0m-.5-5h0m-1.5-4.5h0m-1-5h0m-2-4.5h0m-2-4.5h0m-2.5-4.5h0m-2.5-4.5h0m-3-4h0m-3.5-4h0m-3.5-4h0m-3.5-4h0m-4-3.5h0m-4-3.5h0m-4.5-3h0m-4.5-3h0m-4.5-3h0m-5-2.5h0m-4.5-2h0m-5-2.5h0m-5.5-1.5h0m-5-1.5h0m-5-1.5h0m-5.5-1h0m-5-1h0m-5.5-.5h0m-5-.5h0m3 2h0m-5 0h0m-5 0h0m-5 .5h0m-5 .5h0m-5 .5h0m-4.5 1.5h0m-4.5 1h0m-4.5 1.5h0m-4.5 2h0m-4 2h0m-4 2.5h0m-4 2.5h0m-3.5 2.5h0m-3.5 3h0m-3 3.5h0m-3 3h0m-2.5 3.5h0m-2.5 4h0m-2 4h0m-1.5 4h0m-1.5 4h0m-1 4h0m-1 4.5h0m-.5 4.5h0m0 4.5h0m0 5h0m.5 4.5h0m1 4.5h0m1 5h0m1.5 4.5h0m2 4.5h0m2.5 4.5h0m2.5 4.5h0m3 4.5h0m3 4.5h0m3.5 4h0m4 4h0m4 4h0m4 3.5h0m5 3.5h0m4.5 3h0m5 3h0m5.5 3h0m5.5 2.5h0m5.5 2h0m5.5 2h0m5.5 1.5h0m6 1h0m6 1h0m5.5 .5h0m6 .5h0m5.5-.5h0m6 0h0m5.5-1h0m5.5-1h0m5-1.5h0m5.5-1.5h0m4.5-2h0m5-2.5h0m4.5-2.5h0m4-3h0m4-3h0m3.5-3.5h0m3-3.5h0m3-4h0m3-3.5h0m2-4.5h0m2-4h0m1.5-4.5h0m1.5-4.5h0m.5-4.5h0m.5-4.5h0m.5-5h0m-.5-4.5h0m-.5-4.5h0m-1-5h0m-1-4.5h0m-1.5-4.5h0m-2-4.5h0m-2-4.5h0m-2.5-4.5h0m-3-4h0m-3-4h0m-3-4h0m-3.5-4h0m-3.5-3.5h0m-4-3.5h0m-4-3h0m-4.5-3h0m-4.5-3h0m-4.5-2.5h0m-4.5-2.5h0m-5-2h0m-5-2h0m-5-1.5h0m-5-1.5h0m-5-1.5h0m-5-1h0m-5-.5h0m2.5 2h0m-5-.5h0m-5-.5h0m-4.5 0h0m-5 0h0m-5 .5h0m-5 1h0m-4.5 .5h0m-4.5 1.5h0m-4.5 1.5h0m-4.5 1.5h0m-4 2h0m-4 2h0m-3.5 2.5h0m-4 2.5h0m-3.5 2.5h0m-3 3h0m-3 3.5h0m-2.5 3h0m-2.5 3.5h0m-2 4h0m-2 3.5h0m-1.5 4h0m-1.5 4h0m-1 4.5h0m-.5 4.5h0m-.5 4h0m0 4.5h0m.5 4.5h0m.5 4.5h0m1 4.5h0m1.5 5h0m1.5 4.5h0m2 4.5h0m2.5 4.5h0m2.5 4h0m3 4.5h0m3 4h0m3.5 4h0m4 4h0m4 3.5h0m4.5 3.5h0m4.5 3h0m5 3h0m5 3h0m5 2.5h0m5 2.5h0m5.5 2h0m5.5 1.5h0m6 1.5h0m5.5 1h0m5.5 .5h0m6 .5h0m5.5 0h0m5.5 0h0m5.5-.5h0m5.5-1h0m5-1h0m5-1.5h0m5-2h0m4.5-2h0m4.5-2.5h0m4.5-2.5h0m4-3h0m3.5-3h0m3.5-3.5h0m3-3.5h0m2.5-3.5h0m2.5-4h0m2-4h0m2-4.5h0m1.5-4h0m1-4.5h0m.5-4.5h0m.5-4.5h0m0-4.5h0m-.5-4.5h0m-.5-4.5h0m-1-4.5h0m-1.5-4.5h0m-1.5-4.5h0m-2-4.5h0m-2-4h0m-2.5-4.5h0m-3-4h0m-3-4h0m-3-3.5h0m-3.5-4h0m-3.5-3h0m-4-3.5h0m-4-3h0m-4.5-3h0m-4.5-2.5h0m-4.5-2.5h0m-4.5-2.5h0m-4.5-2h0m-5-1.5h0m-5-2h0m-5-1h0m-5-1h0m3 2h0m-5-1h0m-5-.5h0m-4.5-.5h0m-5-.5h0m-5 0h0m-4.5 .5h0m-5 .5h0m-4.5 .5h0m-4.5 1h0m-4.5 1.5h0m-4 1.5h0m-4.5 1.5h0m-4 2h0m-3.5 2.5h0m-4 2h0m-3.5 2.5h0m-3 3h0m-3 3h0m-3 3h0m-2.5 3.5h0m-2 3.5h0m-2 3.5h0m-1.5 4h0m-1.5 4h0m-1.5 4h0m-.5 4h0m-.5 4.5h0m-.5 4h0m.5 4.5h0m.5 4.5h0m.5 4.5h0m1 4.5h0m1.5 4h0m2 4.5h0m2 4.5h0m2.5 4.5h0m2.5 4h0m3 4h0m3.5 4h0m3.5 4h0m3.5 3.5h0m4.5 3.5h0m4 3.5h0m4.5 3h0m5 2.5h0m5 3h0m5 2h0m5 2h0m5.5 2h0m5.5 1.5h0m5.5 1h0m5.5 1h0m5.5 .5h0m5.5 .5h0m5 0h0m5.5-.5h0m5.5-.5h0m5-1h0m5-1.5h0m5-1.5h0m4.5-1.5h0m4.5-2.5h0m4.5-2h0m4-3h0m3.5-3h0m3.5-3h0m3.5-3h0m2.5-4h0m2.5-3.5h0m2.5-4h0m2-4h0m1.5-4h0m1-4h0m1-4.5h0m.5-4.5h0m.5-4h0m-.5-4.5h0m-.5-4.5h0m-.5-4.5h0m-1-4.5h0m-1.5-4.5h0m-1.5-4h0m-2-4.5h0m-2.5-4h0m-2.5-4h0m-2.5-4h0m-3.5-3.5h0m-3-4h0m-3.5-3.5h0m-3.5-3h0m-4-3h0m-4-3h0m-4-3h0m-4.5-2.5h0m-4.5-2h0m-4.5-2.5h0m-4.5-1.5h0m-5-2h0m-5-1.5h0m2.5 2.5h0m-4.5-1.5h0m-5-1h0m-4.5-.5h0m-5-1h0m-4.5 0h0m-5-.5h0m-4.5 .5h0m-4.5 0h0m-4.5 1h0m-4.5 .5h0m-4.5 1h0m-4.5 1.5h0m-4 1.5h0m-4 2h0m-3.5 2h0m-4 2h0m-3.5 2.5h0m-3 2.5h0m-3 3h0m-3 3h0m-2.5 3h0m-2.5 3.5h0m-2 3.5h0m-2 3.5h0m-1.5 3.5h0m-1 4h0m-1 4h0m-1 4h0m0 4.5h0m0 4h0m0 4.5h0m.5 4h0m1 4.5h0m1 4.5h0m2 4h0m1.5 4.5h0m2.5 4h0m2 4h0m3 4h0m3 4h0m3.5 4h0m3.5 3.5h0m4 3.5h0m4 3.5h0m4 3h0m4.5 3h0m5 2.5h0m4.5 2.5h0m5 2h0m5.5 2h0m5 1.5h0m5.5 1.5h0m5 1h0m5.5 1h0m5.5 .5h0m5 0h0m5.5 0h0m5-.5h0m5.5-1h0m5-1h0m4.5-1.5h0m5-1.5h0m4-2h0m4.5-2h0m4-2.5h0m4-2.5h0m3.5-3h0m3-3h0m3-3.5h0m3-3.5h0m2-3.5h0m2-4h0m2-4h0m1.5-4h0m1-4h0m.5-4.5h0m.5-4h0m0-4.5h0m0-4h0m-.5-4.5h0m-1-4.5h0m-1-4h0m-1.5-4.5h0m-2-4h0m-2-4h0m-2.5-4h0m-2.5-4h0m-2.5-3.5h0m-3-4h0m-3.5-3.5h0m-3.5-3h0m-3.5-3.5h0m-4-3h0m-4-2.5h0m-4-2.5h0m-4.5-2.5h0m-4-2h0m-4.5-2h0m-4.5-2h0m2 2.5h0m-4.5-1.5h0m-4.5-1.5h0m-4.5-1.5h0m-5-.5h0m-4.5-1h0m-4.5-.5h0m-5 0h0m-4.5 0h0m-4.5 0h0m-4.5 .5h0m-4.5 .5h0m-4 1h0m-4.5 1h0m-4 1.5h0m-4 1.5h0m-4 2h0m-3.5 2h0m-3.5 2h0m-3.5 2.5h0m-3 3h0m-2.5 2.5h0m-3 3h0m-2.5 3h0m-2 3.5h0m-2 3.5h0m-1.5 3.5h0m-1.5 4h0m-1 3.5h0m-1 4h0m-.5 4h0m0 4h0m0 4.5h0m.5 4h0m.5 4h0m1 4.5h0m1.5 4h0m1.5 4.5h0m2 4h0m2 4h0m2.5 4h0m3 4h0m3 3.5h0m3.5 4h0m3.5 3.5h0m3.5 3h0m4.5 3.5h0m4 2.5h0m4.5 3h0m4.5 2.5h0m5 2h0m5 2h0m5 2h0m5 1.5h0m5 1h0m5.5 1h0m5 .5h0m5.5 .5h0m5 0h0m5-.5h0m5-.5h0m5-.5h0m5-1.5h0m4.5-1.5h0m4.5-1.5h0m4-2h0m4.5-2h0m3.5-2.5h0m3.5-3h0m3.5-3h0m3-3h0m3-3h0m2.5-3.5h0m2-4h0m2-3.5h0m1.5-4h0m1-4h0m1-4h0m.5-4h0m.5-4h0m0-4.5h0m-.5-4h0m-.5-4.5h0m-1-4h0m-1-4h0m-2-4.5h0m-1.5-4h0m-2-4h0m-2.5-3.5h0m-2.5-4h0m-3-3.5h0m-3-3.5h0m-3-3.5h0m-3.5-3h0m-4-3h0m-3.5-3h0m-4-2.5h0m-4-2.5h0m-4.5-2h0m-4-2h0m1.5 2.5h0m-4-2h0m-4.5-2h0m-4.5-1.5h0m-4.5-1h0m-4.5-1h0m-4.5-1h0m-4.5-.5h0m-4.5-.5h0m-4.5 0h0m-4.5 0h0m-4.5 0h0m-4 .5h0m-4.5 1h0m-4 1h0m-4 1h0m-4 1.5h0m-4 2h0m-3.5 1.5h0m-3.5 2h0m-3.5 2.5h0m-3 2.5h0m-3 2.5h0m-3 3h0m-2.5 3h0m-2 3h0m-2 3h0m-2 3.5h0m-1.5 3.5h0m-1 4h0m-1 3.5h0m-.5 4h0m-.5 4h0m0 4h0m0 4h0m.5 4h0m1 4.5h0m1 4h0m1.5 4h0m1.5 4h0m2 4h0m2.5 4h0m2.5 4h0m2.5 3.5h0m3.5 3.5h0m3 3.5h0m4 3.5h0m3.5 3h0m4 3h0m4.5 3h0m4.5 2.5h0m4.5 2.5h0m4.5 2h0m5 1.5h0m5 2h0m5 1h0m5 1h0m5 1h0m5 .5h0m5 0h0m5 0h0m5-.5h0m5-.5h0m4.5-1h0m5-1h0m4-1.5h0m4.5-2h0m4-2h0m4-2.5h0m3.5-2.5h0m3.5-2.5h0m3-3h0m3-3h0m2.5-3.5h0m2.5-3h0m2-4h0m1.5-3.5h0m1.5-4h0m1-3.5h0m1-4h0m.5-4h0m0-4.5h0m0-4h0m-.5-4h0m-1-4h0m-1-4h0m-1-4h0m-2-4h0m-1.5-4h0m-2.5-4h0m-2-3.5h0m-3-3.5h0m-2.5-3.5h0m-3-3.5h0m-3.5-3h0m-3.5-3h0m-3.5-3h0m-4-3h0m-3.5-2.5h0m-4-2h0m1.5 2.5h0m-4-2h0m-4.5-2h0m-4-2h0m-4.5-1.5h0m-4-1.5h0m-4.5-1h0m-4.5-1h0m-4.5-1h0m-4-.5h0m-4.5 0h0m-4.5 0h0m-4.5 0h0m-4 .5h0m-4.5 .5h0m-4 1h0m-4 1h0m-4 1h0m-3.5 1.5h0m-4 2h0m-3.5 1.5h0m-3.5 2.5h0m-3 2h0m-3 2.5h0m-2.5 2.5h0m-3 3h0m-2 3h0m-2 3h0m-2 3.5h0m-1.5 3.5h0m-1.5 3.5h0m-1 3.5h0m-1 3.5h0m-.5 4h0m-.5 4h0m.5 3.5h0m0 4h0m.5 4h0m1 4h0m1.5 4h0m1.5 4h0m1.5 4h0m2 4h0m2.5 3.5h0m2.5 4h0m3 3.5h0m3 3.5h0m3.5 3.5h0m3.5 3h0m4 3h0m4 3h0m4 2.5h0m4.5 2.5h0m4.5 2h0m4.5 2h0m5 1.5h0m4.5 1.5h0m5 1.5h0m5 .5h0m5 1h0m5 0h0m5 0h0m4.5 0h0m5-.5h0m4.5-.5h0m4.5-1.5h0m4.5-1h0m4.5-1.5h0m4-2h0m4-2h0m3.5-2.5h0m3.5-2.5h0m3-2.5h0m3-3h0m3-3h0m2.5-3.5h0m2-3h0m1.5-3.5h0m2-4h0m1-3.5h0m1-4h0m.5-4h0m.5-4h0m0-3.5h0m-.5-4h0m-.5-4h0m-.5-4h0m-1.5-4h0m-1-4h0m-2-4h0m-2-3.5h0m-2-4h0m-2.5-3.5h0m-2.5-3.5h0m-3-3h0m-3-3.5h0m-3-3h0m-3.5-3h0m-3.5-2.5h0m-4-2.5h0m1.5 2.5h0m-4-2.5h0m-3.5-2.5h0m-4-2h0m-4-1.5h0m-4.5-2h0m-4-1.5h0m-4-1h0m-4.5-1h0m-4.5-1h0m-4-.5h0m-4.5-.5h0m-4 0h0m-4.5 0h0m-4 0h0m-4.5 .5h0m-4 .5h0m-4 1h0m-4 1h0m-3.5 1.5h0m-4 1.5h0m-3.5 2h0m-3 1.5h0m-3.5 2.5h0m-3 2h0m-2.5 2.5h0m-3 3h0m-2 2.5h0m-2.5 3h0m-2 3h0m-1.5 3.5h0m-1.5 3.5h0m-1.5 3.5h0m-.5 3.5h0m-1 3.5h0m-.5 3.5h0m0 4h0m0 4h0m.5 4h0m1 3.5h0m1 4h0m1 4h0m2 4h0m1.5 3.5h0m2.5 4h0m2 3.5h0m3 3.5h0m3 3.5h0m3 3.5h0m3.5 3h0m3.5 3h0m3.5 3h0m4 2.5h0m4.5 2.5h0m4 2h0m4.5 2h0m4.5 2h0m5 1.5h0m4.5 1.5h0m5 1h0m4.5 .5h0m5 .5h0m4.5 .5h0m5 0h0m4.5-.5h0m4.5-.5h0m4.5-1h0m4.5-1h0m4.5-1.5h0m4-1.5h0m4-2h0m3.5-2h0m3.5-2h0m3.5-3h0m3-2.5h0m2.5-3h0m2.5-3h0m2.5-3h0m2-3.5h0m1.5-3.5h0m1.5-3.5h0m1-4h0m1-3.5h0m.5-4h0m0-3.5h0m0-4h0m-.5-4h0m-.5-4h0m-1-4h0m-1-3.5h0m-1.5-4h0m-2-3.5h0m-2-3.5h0m-2-4h0m-2.5-3h0m-2.5-3.5h0m-3-3.5h0m-3-3h0m-3.5-3h0m-3-2.5h0m.5 2.5h0m-3-2.5h0m-3.5-2.5h0m-4-2.5h0m-3.5-2h0m-4-2h0m-4-1.5h0m-4-1.5h0m-4-1.5h0m-4-1h0m-4.5-1h0m-4-1h0m-4.5-.5h0m-4 0h0m-4-.5h0m-4.5 .5h0m-4 0h0m-4 .5h0m-4 1h0m-4 1h0m-3.5 1h0m-3.5 1.5h0m-3.5 1.5h0m-3.5 2h0m-3.5 2h0m-3 2h0m-2.5 2h0m-3 2.5h0m-2.5 3h0m-2 2.5h0m-2 3h0m-2 3h0m-1.5 3.5h0m-1.5 3h0m-1 3.5h0m-.5 3.5h0m-1 4h0m0 3.5h0m0 3.5h0m0 4h0m1 3.5h0m.5 4h0m1 4h0m1.5 3.5h0m1.5 4h0m2 3.5h0m2.5 3.5h0m2.5 3.5h0m2.5 3.5h0m3 3.5h0m3 3h0m3.5 3h0m3.5 3h0m4 2.5h0m4 2.5h0m4 2.5h0m4 2h0m4.5 2h0m4.5 1.5h0m4.5 1.5h0m4.5 1h0m5 1h0m4.5 .5h0m4.5 .5h0m5 0h0m4.5 0h0m4.5-.5h0m4.5-.5h0m4-1h0m4.5-1h0m4-1.5h0m4-2h0m3.5-1.5h0m3.5-2.5h0m3.5-2h0m3-2.5h0m3-3h0m2.5-3h0m2.5-3h0m2-3h0m2-3.5h0m1.5-3.5h0m1-3.5h0m1-3.5h0m.5-3.5h0m.5-4h0m0-3.5h0m0-4h0m-.5-3.5h0m-.5-4h0m-1-3.5h0m-1.5-4h0m-1.5-3.5h0m-2-3.5h0m-2-3.5h0m-2-3.5h0m-2.5-3.5h0m-2.5-3h0m-3-3h0m-3-3h0m.5 2.5h0m-3-3h0m-3-2.5h0m-3.5-2.5h0m-3.5-2.5h0m-3.5-2h0m-4-2h0m-3.5-2h0m-4-1.5h0m-4-1.5h0m-4-1h0m-4-1.5h0m-4.5-.5h0m-4-1h0m-4 0h0m-4-.5h0m-4 0h0m-4 .5h0m-4 0h0m-4 1h0m-4 .5h0m-3.5 1h0m-3.5 1.5h0m-3.5 1.5h0m-3.5 1.5h0m-3.5 1.5h0m-3 2h0m-2.5 2.5h0m-3 2h0m-2.5 2.5h0m-2.5 3h0m-2 2.5h0m-2 3h0m-1.5 3h0m-1.5 3.5h0m-1 3h0m-1 3.5h0m-.5 3.5h0m-.5 3.5h0m-.5 3.5h0m.5 4h0m0 3.5h0m1 3.5h0m1 4h0m1 3.5h0m1.5 3.5h0m1.5 4h0m2 3.5h0m2.5 3.5h0m2.5 3h0m2.5 3.5h0m3 3h0m3 3h0m3.5 3h0m3.5 3h0m4 2.5h0m4 2h0m4 2.5h0m4 2h0m4.5 1.5h0m4.5 1.5h0m4 1.5h0m4.5 1h0m5 .5h0m4.5 .5h0m4.5 .5h0m4.5 0h0m4.5-.5h0m4-.5h0m4.5-.5h0m4-1h0m4-1.5h0m4-1.5h0m4-1.5h0m3.5-2h0m3-2h0m3.5-2.5h0m3-2.5h0m2.5-2.5h0m2.5-3h0m2-3h0m2-3.5h0m1.5-3h0m1.5-3.5h0m1-3.5h0m1-3.5h0m.5-3.5h0m.5-3.5h0m0-4h0m-.5-3.5h0m-.5-4h0m-1-3.5h0m-1-3.5h0m-1.5-3.5h0m-1.5-4h0m-1.5-3h0m-2-3.5h0m-2.5-3.5h0m-2.5-3h0m-2.5-3h0m0 2.5h0m-2.5-3h0m-3-3h0m-3-2.5h0m-3-2.5h0m-3.5-2.5h0m-3.5-2.5h0m-3.5-2h0m-3.5-1.5h0m-4-2h0m-3.5-1.5h0m-4-1.5h0m-4-1h0m-4-1h0m-4-.5h0m-4-.5h0m-4-.5h0m-4 0h0m-4 0h0m-4 .5h0m-3.5 .5h0m-4 .5h0m-3.5 1h0m-4 1h0m-3.5 1h0m-3 1.5h0m-3.5 2h0m-3 1.5h0m-3 2h0m-2.5 2.5h0m-2.5 2h0m-2.5 2.5h0m-2 3h0m-2 2.5h0m-2 3h0m-1.5 3h0m-1.5 3h0m-1 3.5h0m-.5 3.5h0m-.5 3h0m-.5 3.5h0m0 3.5h0m0 4h0m.5 3.5h0m1 3.5h0m1 3.5h0m1 3.5h0m1.5 3.5h0m2 3.5h0m2 3.5h0m2.5 3.5h0m2.5 3h0m2.5 3.5h0m3 3h0m3.5 3h0m3 2.5h0m3.5 2.5h0m4 2.5h0m4 2.5h0m4 2h0m4 1.5h0m4 1.5h0m4.5 1.5h0m4.5 1h0m4 1h0m4.5 .5h0m4.5 .5h0m4.5 .5h0m4.5-.5h0m4 0h0m4.5-1h0m4-.5h0m4-1h0m4-1.5h0m3.5-1.5h0m3.5-2h0m3.5-1.5h0m3-2.5h0m3-2h0m3-3h0m2.5-2.5h0m2-3h0m2.5-3h0m1.5-3h0m1.5-3h0m1.5-3.5h0m1-3.5h0m.5-3.5h0m.5-3.5h0m0-3.5h0m0-3.5h0m-.5-3.5h0m-.5-4h0m-1-3.5h0m-1-3.5h0m-1.5-3.5h0m-1.5-3.5h0m-2-3h0m-2-3.5h0m-2.5-3h0m0 2.5h0m-2.5-3.5h0m-2.5-2.5h0m-2.5-3h0m-3-3h0m-3-2.5h0m-3-2h0m-3-2.5h0m-3.5-2h0m-3.5-2h0m-4-2h0m-3.5-1.5h0m-3.5-1.5h0m-4-1h0m-4-1h0m-4-1h0m-3.5-.5h0m-4-.5h0m-4 0h0m-4 0h0m-3.5 0h0m-4 .5h0m-3.5 .5h0m-4 .5h0m-3.5 1h0m-3.5 1h0m-3.5 1.5h0m-3 1.5h0m-3 1.5h0m-3 2h0m-3 2h0m-2.5 2.5h0m-2.5 2h0m-2 2.5h0m-2 3h0m-2 2.5h0m-1.5 3h0m-1.5 3h0m-1 3h0m-1 3h0m-.5 3.5h0m-.5 3.5h0m-.5 3.5h0m0 3h0m.5 3.5h0m.5 3.5h0m1 3.5h0m1 3.5h0m1.5 3.5h0m1.5 3.5h0m2 3.5h0m2 3.5h0m2.5 3h0m2.5 3h0m2.5 3h0m3 3h0m3.5 3h0m3 2.5h0m3.5 2.5h0m4 2h0m3.5 2h0m4 2h0m4 2h0m4.5 1.5h0m4 1h0m4 1h0m4.5 1h0m4.5 .5h0m4 0h0m4.5 0h0m4 0h0m4.5-.5h0m4-.5h0m4-1h0m3.5-1h0m4-1.5h0m3.5-1.5h0m3.5-2h0m3-2h0m3-2h0m3-2.5h0m2.5-2.5h0m2.5-2.5h0m2-3h0m2-3h0m1.5-3h0m1.5-3.5h0m1-3h0m1-3.5h0m.5-3.5h0m0-3.5h0m.5-3h0m-.5-4h0m-.5-3.5h0m-.5-3.5h0m-1-3h0m-1.5-3.5h0m-1.5-3.5h0m-1.5-3.5h0m-2-3h0" fill="none" stroke="#000" stroke-width="6" stroke-linecap="round"/>
<path d="M1296.1 600.8L1291.2 598.0L1286.2 595.6L1281.0 593.5L1275.7 591.8L1270.3 590.4L1264.9 589.5L1259.4 588.9L1254.0 588.6L1248.7 588.8L1243.4 589.4L1238.3 590.3L1233.3 591.6L1228.6 593.3L1224.0 595.3L1219.8 597.7L1215.8 600.4L1212.2 603.5L1208.9 606.8L1205.9 610.4L1203.4 614.3L1201.3 618.4L1199.7 622.7L1198.5 627.2L1197.7 631.9L1197.5 636.6L1197.7 641.4L1198.5 646.3L1199.7 651.2L1201.5 656.0L1203.7 660.8L1206.4 665.5L1209.6 670.0L1213.2 674.4L1217.2 678.5L1221.6 682.3L1226.3 685.9L1231.4 689.1L1236.7 691.9L1242.3 694.4L1248.1 696.5L1253.9 698.1L1259.9 699.3L1265.9 700.0L1271.9 700.3L1277.8 700.1L1283.5 699.4L1289.1 698.3L1294.5 696.7L1299.6 694.7L1304.4 692.3L1308.8 689.4L1312.9 686.3L1316.5 682.8L1319.7 678.9L1322.4 674.9L1324.6 670.5L1326.3 666.0L1327.5 661.4L1328.2 656.6L1328.4 651.8L1328.1 646.9L1327.3 642.0L1326.0 637.2L1324.3 632.4L1322.0 627.8L1319.4 623.3L1316.4 618.9L1312.9 614.8L1309.2 610.9L1305.1 607.2L1300.7 603.9Z" fill="#000" stroke="#000" stroke-width="5"/>
<g fill="none">
<use href="#gm" stroke="#9cc3dd" stroke-width="1" stroke-dasharray="2.2 1.5" opacity=".88"/>
<use href="#gM" stroke="#5a7384" stroke-width="1" stroke-dasharray="2.2 1.3" opacity=".9"/>
</g>
<use href="#dt" clip-path="url(#ci)" opacity=".62"/>
<path d="M1318.7 573.3L1310.5 568.8L1302.0 564.8L1293.3 561.5L1284.4 558.7L1275.5 556.5L1266.4 554.9L1257.4 553.9L1248.4 553.6L1239.5 553.9L1230.8 554.8L1222.3 556.3L1214.0 558.4L1206.0 561.1L1198.4 564.4L1191.2 568.3L1184.4 572.7L1178.2 577.6L1172.4 583.1L1167.3 589.1L1162.8 595.5L1159.0 602.3L1155.9 609.5L1153.6 617.1L1152.1 624.9L1151.3 633.0L1151.4 641.2L1152.4 649.6L1154.2 658.1L1156.9 666.5L1160.4 674.9L1164.8 683.1L1170.0 691.1L1176.1 698.9L1182.9 706.2L1190.5 713.2L1198.7 719.6L1207.5 725.5L1216.9 730.7L1226.7 735.2L1236.8 739.0L1247.3 742.0L1257.9 744.2L1268.6 745.6L1279.2 746.1L1289.7 745.7L1300.0 744.4L1309.9 742.3L1319.4 739.4L1328.4 735.7L1336.7 731.3L1344.4 726.1L1351.4 720.3L1357.6 714.0L1362.9 707.1L1367.4 699.8L1371.0 692.1L1373.7 684.1L1375.5 675.9L1376.4 667.5L1376.3 659.1L1375.4 650.6L1373.7 642.2L1371.2 634.0L1367.8 625.9L1363.8 618.0L1359.0 610.4L1353.6 603.2L1347.6 596.3L1341.0 589.8L1334.0 583.8L1326.5 578.3Z" fill="#000" opacity=".6"/>
<path d="M1330.6 558.7L1320.6 553.4L1310.3 548.7L1299.7 544.7L1289.0 541.4L1278.2 538.8L1267.3 536.9L1256.3 535.7L1245.5 535.3L1234.8 535.7L1224.2 536.7L1213.9 538.5L1203.9 541.0L1194.2 544.2L1184.9 548.2L1176.1 552.8L1167.9 558.1L1160.2 564.0L1153.1 570.6L1146.8 577.7L1141.2 585.4L1136.4 593.7L1132.4 602.4L1129.4 611.6L1127.3 621.1L1126.1 631.0L1126.0 641.1L1127.0 651.4L1129.0 661.9L1132.1 672.3L1136.2 682.7L1141.5 693.0L1147.8 703.0L1155.1 712.7L1163.4 722.0L1172.7 730.8L1182.8 738.9L1193.8 746.4L1205.4 753.0L1217.6 758.8L1230.3 763.6L1243.4 767.5L1256.7 770.3L1270.1 772.0L1283.4 772.6L1296.6 772.2L1309.5 770.6L1321.9 767.9L1333.8 764.2L1345.0 759.4L1355.4 753.8L1364.9 747.2L1373.5 739.9L1381.0 731.8L1387.5 723.1L1392.9 713.9L1397.2 704.2L1400.3 694.2L1402.3 684.0L1403.1 673.6L1402.8 663.1L1401.5 652.7L1399.1 642.4L1395.8 632.2L1391.5 622.3L1386.3 612.7L1380.3 603.5L1373.6 594.7L1366.1 586.4L1358.0 578.6L1349.3 571.4L1340.2 564.8Z" fill="#000" opacity=".4"/>
<g fill="none" clip-path="url(#cj)" stroke="#b9d9f2" stroke-width="1" stroke-dasharray="1.2 3.4"><use href="#gm" opacity=".55"/><use href="#gM" opacity=".8"/></g>
<g fill="none">
<path d="M1295.4 601.6L1707.5 99.0" stroke="#f00" stroke-width="1" opacity=".85" stroke-dasharray="3 .8"/>
<path d="M1194.7 597.6L428.5 99.0" stroke="#078407" stroke-width="1" opacity=".8" stroke-dasharray="3 .8"/>
</g>
<path d="M1262.7 641.3L1296.5 545.5" stroke="#c4c4c8" stroke-width="1.1"/>
<path d="M1296.5 545.5L1347 402.5" stroke="#1010e8" stroke-width="1" stroke-dasharray="1.5 1.2"/>
<ellipse cx="1262.7" cy="642" rx="4.6" ry="3.6" fill="#f2f2f2"/>
</svg></div><div class="grp" style="left:0px;top:40px;width:184px;height:443.5px;background:rgba(181,181,181,.5)"></div><div class="grp" style="left:255px;top:41px;width:156px;height:162px;background:rgba(181,181,181,.5)"></div><div class="grp" style="left:495px;top:41px;width:542px;height:352px;background:rgba(72,185,255,.52)"></div><svg class="abs" style="left:0;top:0" width="1692" height="899" viewBox="228 101 1692 899" fill="none" stroke="#3b3b3b" stroke-width="2.800"><path d="M403 217.6C441.27 217.6 453.73 216.6 492 216.6"/><path d="M403 369.6C470.82 369.6 424.18 239.4 492 239.4"/><path d="M630 217C808.24 217 866.26 216.8 1044.5 216.8"/><path d="M797 349.8C819.14 349.8 826.36 349.8 848.5 349.8"/><path d="M797 412.3C824.88 412.3 820.62 372.9 848.5 372.9"/><path d="M787.5 474.3C830.28 474.3 805.72 395.7 848.5 395.7"/><path d="M996 349.9C1039.06 349.9 1001.44 262.3 1044.5 262.3"/><path d="M996 273.4C1021.42 273.4 1019.08 239.6 1044.5 239.6"/><path d="M150 216.5C195.16 216.5 209.84 218.3 255 218.3"/><path d="M150 281C198.42 281 206.58 240.3 255 240.3"/><path d="M150 368.8C195.15 368.8 209.85 370 255 370"/><path d="M150 512C218.14 512 186.86 393.3 255 393.3"/><circle cx="402.5" cy="217.6" r="4" fill="#3b3b3b" stroke="none"/><circle cx="492.5" cy="216.6" r="4" fill="#3b3b3b" stroke="none"/><circle cx="402.5" cy="369.6" r="4" fill="#3b3b3b" stroke="none"/><circle cx="492.5" cy="239.4" r="4" fill="#3b3b3b" stroke="none"/><circle cx="629.5" cy="217" r="4" fill="#3b3b3b" stroke="none"/><circle cx="1045" cy="216.8" r="4" fill="#3b3b3b" stroke="none"/><circle cx="796.5" cy="349.8" r="4" fill="#3b3b3b" stroke="none"/><circle cx="849" cy="349.8" r="4" fill="#3b3b3b" stroke="none"/><circle cx="796.5" cy="412.3" r="4" fill="#3b3b3b" stroke="none"/><circle cx="849" cy="372.9" r="4" fill="#3b3b3b" stroke="none"/><circle cx="787" cy="474.3" r="4" fill="#3b3b3b" stroke="none"/><circle cx="849" cy="395.7" r="4" fill="#3b3b3b" stroke="none"/><circle cx="995.5" cy="349.9" r="4" fill="#3b3b3b" stroke="none"/><circle cx="1045" cy="262.3" r="4" fill="#3b3b3b" stroke="none"/><circle cx="995.5" cy="273.4" r="4" fill="#3b3b3b" stroke="none"/><circle cx="1045" cy="239.6" r="4" fill="#3b3b3b" stroke="none"/><circle cx="149.5" cy="216.5" r="4" fill="#3b3b3b" stroke="none"/><circle cx="255.5" cy="218.3" r="4" fill="#3b3b3b" stroke="none"/><circle cx="149.5" cy="281" r="4" fill="#3b3b3b" stroke="none"/><circle cx="255.5" cy="240.3" r="4" fill="#3b3b3b" stroke="none"/><circle cx="149.5" cy="368.8" r="4" fill="#3b3b3b" stroke="none"/><circle cx="255.5" cy="370" r="4" fill="#3b3b3b" stroke="none"/><circle cx="149.5" cy="512" r="4" fill="#3b3b3b" stroke="none"/><circle cx="255.5" cy="393.3" r="4" fill="#3b3b3b" stroke="none"/><path d="M662.700 462.500h60" stroke="#058caf" stroke-width="5.400"/><circle cx="722.700" cy="462.700" r="4.700" fill="#058caf" stroke="none"/></svg><div class="tx" style="left:406.32px;top:352.07px;font-size:33px;color:#058caf;font-weight:bold;line-height:16px;">1</div><div class="abs" style="left:406.8px;top:365.6px;width:7.300px;height:6.500px;background:#fafafa"></div><div class="abs" style="left:418.75px;top:365.6px;width:7px;height:6.500px;background:#fafafa"></div><div class="node" style="left:27px;top:81px;width:148px;height:91px"><div class="h" style="height:23px"></div><div class="tx" style="left:69.45px;top:4.24px;font-size:16.9px;color:#fff;font-weight:bold;">*</div><div class="port i" style="top:22px;width:64px"><svg width="8" height="12" viewBox="0 0 8 12"><path d="M1.700 1.800l4.100 4.200-4.100 4.200" fill="none" stroke="#48434a" stroke-width="2.500"/></svg></div><div class="tx" style="left:3.66px;top:26.27px;font-size:12.2px;color:#4a4549;">x</div><div class="port i" style="top:45px;width:64px"><svg width="8" height="12" viewBox="0 0 8 12"><path d="M1.700 1.800l4.100 4.200-4.100 4.200" fill="none" stroke="#48434a" stroke-width="2.500"/></svg></div><div class="sep" style="top:44px;width:64px"></div><div class="tx" style="left:3.47px;top:49.27px;font-size:12.2px;color:#4a4549;">y</div><div class="port o" style="top:22px;width:47px"></div><div class="tx" style="left:103.76px;top:26.27px;font-size:12.2px;color:#4a4549;letter-spacing:0.13px;">var[]..[]</div><div class="tx" style="left:122.88px;top:71.54px;font-size:7.1px;color:#83786c;font-weight:bold;">AUTO</div></div><div class="node" style="left:27px;top:234px;width:148px;height:91px"><div class="h" style="height:23px"></div><div class="tx" style="left:69.45px;top:4.24px;font-size:16.9px;color:#fff;font-weight:bold;">*</div><div class="port i" style="top:22px;width:64px"><svg width="8" height="12" viewBox="0 0 8 12"><path d="M1.700 1.800l4.100 4.200-4.100 4.200" fill="none" stroke="#48434a" stroke-width="2.500"/></svg></div><div class="tx" style="left:3.66px;top:26.27px;font-size:12.2px;color:#4a4549;">x</div><div class="port i" style="top:45px;width:64px"><svg width="8" height="12" viewBox="0 0 8 12"><path d="M1.700 1.800l4.100 4.200-4.100 4.200" fill="none" stroke="#48434a" stroke-width="2.500"/></svg></div><div class="sep" style="top:44px;width:64px"></div><div class="tx" style="left:3.47px;top:49.27px;font-size:12.2px;color:#4a4549;">y</div><div class="port o" style="top:22px;width:47px"></div><div class="tx" style="left:103.76px;top:26.27px;font-size:12.2px;color:#4a4549;letter-spacing:0.13px;">var[]..[]</div><div class="tx" style="left:122.88px;top:71.54px;font-size:7.1px;color:#83786c;font-weight:bold;">AUTO</div></div><div class="node" style="left:264px;top:80px;width:138px;height:113.5px"><div class="h" style="height:24px"></div><div class="tx" style="left:11.01px;top:3.61px;font-size:11.8px;color:#fff;letter-spacing:-0.17px;font-weight:bold;">Point.ByCoordinates</div><div class="port i" style="top:23px;width:64px"><svg width="8" height="12" viewBox="0 0 8 12"><path d="M1.700 1.800l4.100 4.200-4.100 4.200" fill="none" stroke="#48434a" stroke-width="2.500"/></svg></div><div class="tx" style="left:3.66px;top:26.37px;font-size:12.2px;color:#4a4549;">x</div><div class="port i" style="top:46px;width:64px"><svg width="8" height="12" viewBox="0 0 8 12"><path d="M1.700 1.800l4.100 4.200-4.100 4.200" fill="none" stroke="#48434a" stroke-width="2.500"/></svg></div><div class="sep" style="top:45px;width:64px;background:#e6e3dd"></div><div class="tx" style="left:3.47px;top:49.37px;font-size:12.2px;color:#4a4549;">y</div><div class="port i" style="top:69px;width:64px"><svg width="8" height="12" viewBox="0 0 8 12"><path d="M1.700 1.800l4.100 4.200-4.100 4.200" fill="none" stroke="#48434a" stroke-width="2.500"/></svg></div><div class="sep" style="top:68px;width:64px"></div><div class="tx" style="left:3.31px;top:72.37px;font-size:12.2px;color:#4a4549;">z</div><div class="port o" style="top:23px;width:37.5px"></div><div class="tx" style="left:103.1px;top:26.37px;font-size:12.2px;color:#4a4549;letter-spacing:0.25px;">Point</div><div class="tx" style="left:112.88px;top:94.04px;font-size:7.1px;color:#83786c;font-weight:bold;">AUTO</div></div><div class="node" style="left:816px;top:80px;width:211px;height:113.5px"><div class="h" style="height:24px"></div><div class="tx" style="left:57.42px;top:3.61px;font-size:11.8px;color:#fff;letter-spacing:-0.06px;font-weight:bold;">Geometry.Rotate</div><div class="port i" style="top:23px;width:112px"><svg width="8" height="12" viewBox="0 0 8 12"><path d="M1.700 1.800l4.100 4.200-4.100 4.200" fill="none" stroke="#48434a" stroke-width="2.500"/></svg></div><div class="tx" style="left:3.29px;top:26.37px;font-size:12.2px;color:#4a4549;letter-spacing:0.11px;">geometry</div><div class="port i" style="top:46px;width:112px"><svg width="8" height="12" viewBox="0 0 8 12"><path d="M1.700 1.800l4.100 4.200-4.100 4.200" fill="none" stroke="#48434a" stroke-width="2.500"/></svg></div><div class="sep" style="top:45px;width:112px;background:#e6e3dd"></div><div class="tx" style="left:3.61px;top:49.37px;font-size:12.2px;color:#4a4549;letter-spacing:-0.29px;">basePlane</div><div class="port i" style="top:69px;width:112px"><svg width="8" height="12" viewBox="0 0 8 12"><path d="M1.700 1.800l4.100 4.200-4.100 4.200" fill="none" stroke="#48434a" stroke-width="2.500"/></svg></div><div class="sep" style="top:68px;width:112px"></div><div class="tx" style="left:3.89px;top:72.37px;font-size:12.2px;color:#4a4549;letter-spacing:-0.16px;">degrees</div><div class="port o" style="top:23px;width:62px"></div><div class="tx" style="left:151.89px;top:26.37px;font-size:12.2px;color:#4a4549;letter-spacing:-0.02px;">Geometry</div><div class="tx" style="left:191.56px;top:94.04px;font-size:7.1px;color:#6f675e;font-weight:bold;">XXX</div></div><div class="node" style="left:692px;top:136px;width:76px;height:68.5px"><div class="h" style="height:24px"></div><div class="tx" style="left:12.21px;top:3.61px;font-size:11.8px;color:#fff;letter-spacing:-0.35px;font-weight:bold;">Plane.XY</div><div class="port o" style="top:23px;width:40px"></div><div class="tx" style="left:38.4px;top:27.17px;font-size:12.2px;color:#4a4549;letter-spacing:-0.14px;">Plane</div><div class="tx" style="left:50.88px;top:49.04px;font-size:7.1px;color:#83786c;font-weight:bold;">AUTO</div></div><div class="node" style="left:620px;top:213px;width:148px;height:113.5px"><div class="h" style="height:24px"></div><div class="tx" style="left:55.01px;top:3.61px;font-size:11.8px;color:#fff;letter-spacing:-0.27px;font-weight:bold;">Range</div><div class="port i" style="top:23px;width:82px"><svg width="8" height="12" viewBox="0 0 8 12"><path d="M1.700 1.800l4.100 4.200-4.100 4.200" fill="none" stroke="#48434a" stroke-width="2.500"/></svg></div><div class="tx" style="left:4.06px;top:26.97px;font-size:12.2px;color:#4a4549;letter-spacing:0.28px;">start</div><div class="port i" style="top:46px;width:82px"><svg width="8" height="12" viewBox="0 0 8 12"><path d="M1.700 1.800l4.100 4.200-4.100 4.200" fill="none" stroke="#48434a" stroke-width="2.500"/></svg></div><div class="sep" style="top:45px;width:82px"></div><div class="tx" style="left:3.88px;top:49.97px;font-size:12.2px;color:#4a4549;letter-spacing:0.47px;">end</div><div class="port i" style="top:69px;width:82px"><svg width="8" height="12" viewBox="0 0 8 12"><path d="M1.700 1.800l4.100 4.200-4.100 4.200" fill="none" stroke="#48434a" stroke-width="2.500"/></svg></div><div class="sep" style="top:68px;width:82px"></div><div class="tx" style="left:4.06px;top:72.97px;font-size:12.2px;color:#4a4549;letter-spacing:0.1px;">step</div><div class="port o" style="top:23px;width:28px"></div><div class="tx" style="left:122.56px;top:26.97px;font-size:12.2px;color:#4a4549;letter-spacing:-0.13px;">seq</div></div><div class="node" style="left:515px;top:213px;width:54px;height:47px"><div class="h" style="height:24px"></div><div class="tx" style="left:2.6px;top:3.84px;font-size:12px;color:#fff;letter-spacing:0.17px;font-weight:bold;">Number</div><div class="num" style="left:0;top:23px;width:34px;height:22px"></div><div class="num" style="right:0;top:23px;width:17px;height:22px"></div><div class="tx" style="left:3.57px;top:25.85px;font-size:11.1px;color:#2d2a2d;letter-spacing:0.1px;">0.000</div><div class="tx" style="left:39.89px;top:25.83px;font-size:10.3px;color:#3a363a;">&gt;</div></div><div class="node" style="left:503px;top:276px;width:66px;height:46px"><div class="h" style="height:24px"></div><div class="tx" style="left:8.6px;top:3.84px;font-size:12px;color:#fff;letter-spacing:0.17px;font-weight:bold;">Number</div><div class="num" style="left:0;top:23px;width:46px;height:21px"></div><div class="num" style="right:0;top:23px;width:17px;height:21px"></div><div class="tx" style="left:4.38px;top:25.85px;font-size:11.1px;color:#2d2a2d;letter-spacing:-0.13px;">360.000</div><div class="tx" style="left:51.89px;top:25.83px;font-size:10.3px;color:#3a363a;">&gt;</div></div><div class="abs" style="left:500px;top:335.1px;width:60.4px;height:52.1px;border:3.400px solid #058caf;background:#058caf"></div><div class="node" style="left:503.4px;top:338.5px;width:53.6px;height:45.3px"><div class="h" style="height:24px"></div><div class="tx" style="left:2.4px;top:3.84px;font-size:12px;color:#fff;letter-spacing:0.17px;font-weight:bold;">Number</div><div class="num" style="left:0;top:23px;width:33.6px;height:20.3px"></div><div class="num" style="right:0;top:23px;width:17px;height:20.3px"></div><div class="tx" style="left:3.78px;top:25.85px;font-size:11.1px;color:#2d2a2d;letter-spacing:-0.08px;">3.600</div><div class="tx" style="left:39.49px;top:25.83px;font-size:10.3px;color:#3a363a;">&gt;</div></div><svg class="abs" style="left:749.5px;top:313.5px" width="14" height="8" viewBox="0 0 14 8" stroke="#8a857e" stroke-width="1.200"><path d="M1.500 0v7M5 0v7M8 0l3 7"/></svg><div class="btn" style="left:1580px;top:11.5px;width:105px;height:25px"></div><svg class="abs" style="left:1580px;top:11.5px" width="105" height="25" viewBox="0 0 105 25" fill="none"><path d="M53 0v25" stroke="#e2e2e2"/><circle cx="15" cy="14" r="5.500" stroke="#777" stroke-width="1"/><path d="M14 13.500l7.500-9 7 9z" stroke="#777" stroke-width="1"/><path d="M33 9.500h8v9h-8zM33 9.500l2.500-2.500h8l-2.500 2.500M43.500 7v9l-2.500 2.500" stroke="#777" stroke-width="1"/><rect x="63" y="6" width="8.500" height="5" fill="#b9dcfb" stroke="#1e90ff"/><rect x="68" y="16.500" width="9.500" height="3" fill="#b9dcfb" stroke="#1e90ff"/><rect x="87" y="8" width="12" height="8.500" fill="#b9dcfb" stroke="#1e90ff"/><path d="M87 10.500h12" stroke="#1e90ff"/><path d="M71.500 8.500c8 1 8 3.500 15.500 4M77.500 18c5-.5 4-4.500 9.500-5" stroke="#1e90ff" stroke-width=".9"/></svg><div class="btn" style="left:1661px;top:46.5px;width:24px;height:72px"></div><svg class="abs" style="left:1661px;top:46.5px" width="24" height="72" viewBox="0 0 24 72" fill="none" stroke="#666"><path d="M6.500 11v-4h4M13.500 7h4v4M17.500 14v4h-4M10.500 18h-4v-4" stroke-width="1.600"/><path d="M7 36.500h10M12 31.500v10" stroke-width="1.600"/><path d="M7 59.500h10" stroke-width="1.600"/></svg><div class="btn" style="left:1661px;top:125.5px;width:24px;height:24px"></div><svg class="abs" style="left:1661px;top:125.5px" width="24" height="24" viewBox="0 0 24 24" fill="#666" stroke="#666"><path d="M12 6v12M6 12h12" stroke-width="1.600" fill="none"/><path d="M12 3.500l2.600 3h-5.200zM12 20.500l2.600-3h-5.200zM3.500 12l3-2.600v5.200zM20.500 12l-3-2.600v5.200z" stroke="none"/></svg></div><div id="sline" class="abs"></div><div id="status" class="abs"><div id="auto" class="abs"><div class="tx" style="left:6.97px;top:8.94px;font-size:14.6px;color:#dcdcdc;letter-spacing:0.31px;">Automatic</div><div class="a abs"></div></div><div class="tx" style="left:227.94px;top:16.45px;font-size:11.7px;color:#999;letter-spacing:0.1px;font-style:italic;">Run completed.</div></div></body></html>
